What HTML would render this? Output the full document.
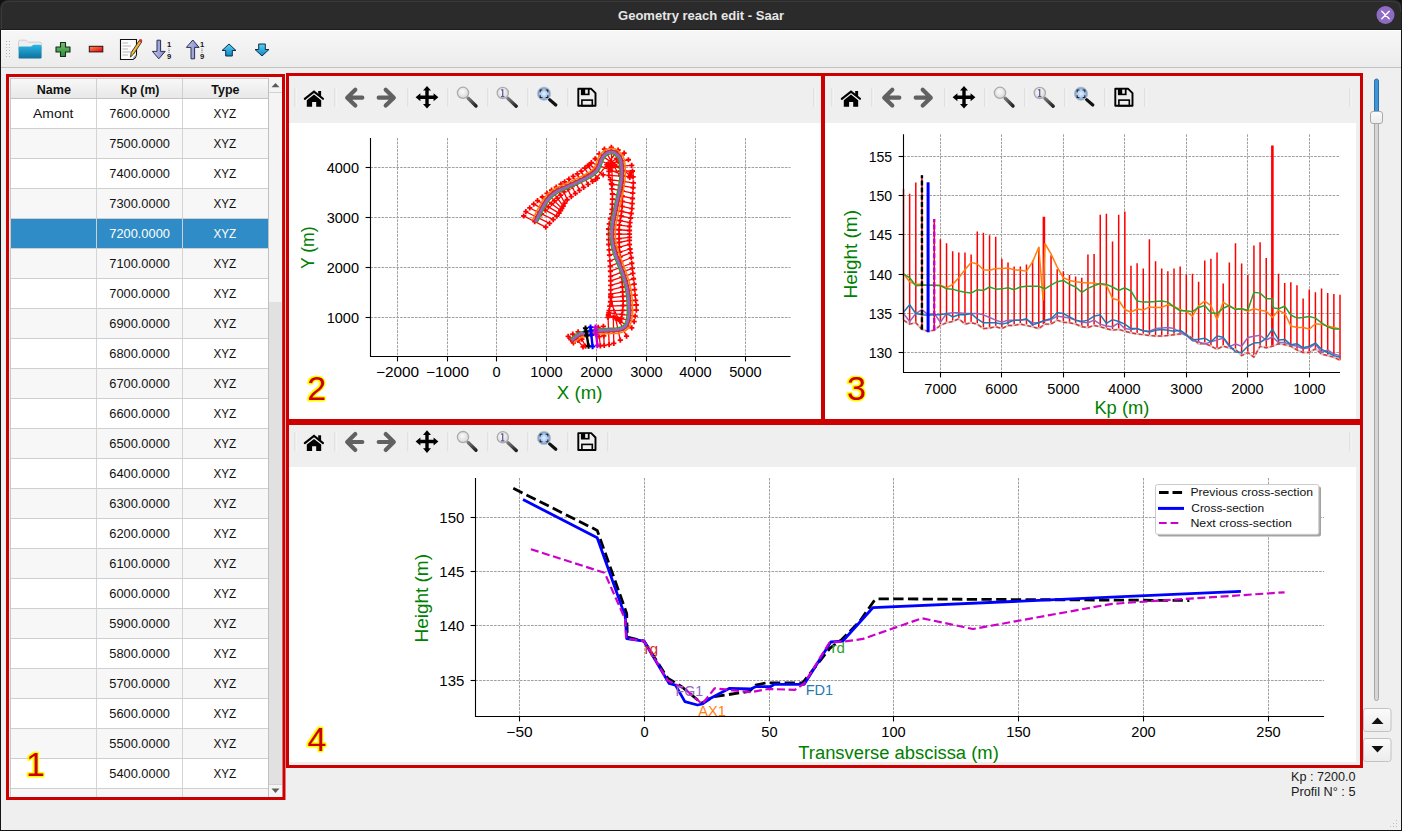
<!DOCTYPE html>
<html><head><meta charset="utf-8"><title>Geometry reach edit - Saar</title>
<style>
html,body{margin:0;padding:0;background:#efefef;overflow:hidden;}
svg{display:block;font-family:"Liberation Sans", sans-serif;}
</style></head><body>
<svg width="1402" height="831" viewBox="0 0 1402 831">
<defs>
<linearGradient id="tbg" x1="0" y1="0" x2="0" y2="1"><stop offset="0" stop-color="#f7f7f7"/><stop offset="1" stop-color="#ececec"/></linearGradient>
<linearGradient id="hdr" x1="0" y1="0" x2="0" y2="1"><stop offset="0" stop-color="#f8f8f8"/><stop offset="1" stop-color="#e8e8e8"/></linearGradient>
<linearGradient id="btn" x1="0" y1="0" x2="0" y2="1"><stop offset="0" stop-color="#fbfbfb"/><stop offset="1" stop-color="#ececec"/></linearGradient>
<linearGradient id="folderF" x1="0" y1="0" x2="0" y2="1"><stop offset="0" stop-color="#29b6e8"/><stop offset="1" stop-color="#0f6f99"/></linearGradient>
<linearGradient id="plusG" x1="0" y1="0" x2="0" y2="1"><stop offset="0" stop-color="#6fc36f"/><stop offset="1" stop-color="#2e8a3a"/></linearGradient>
<linearGradient id="minusG" x1="0" y1="0" x2="1" y2="1"><stop offset="0" stop-color="#ff8a5a"/><stop offset="1" stop-color="#e8000a"/></linearGradient>
<linearGradient id="sortG" x1="0" y1="0" x2="1" y2="0"><stop offset="0" stop-color="#c3c8ee"/><stop offset="1" stop-color="#7d86c2"/></linearGradient>
<linearGradient id="arrG" x1="0" y1="0" x2="0" y2="1"><stop offset="0" stop-color="#5fd0f5"/><stop offset="1" stop-color="#0a86c4"/></linearGradient>
<linearGradient id="handleG" x1="0" y1="0" x2="1" y2="1"><stop offset="0" stop-color="#777"/><stop offset="1" stop-color="#222"/></linearGradient>
<radialGradient id="lensG" cx="0.45" cy="0.4" r="0.6"><stop offset="0" stop-color="#fafafa"/><stop offset="1" stop-color="#d8d8d8"/></radialGradient>
<radialGradient id="lensB" cx="0.5" cy="0.5" r="0.55"><stop offset="0" stop-color="#e6eff9"/><stop offset="0.55" stop-color="#a9c6ea"/><stop offset="1" stop-color="#4a82cc"/></radialGradient>
</defs>
<rect x="0" y="0" width="1402" height="831" fill="#efefef"/>
<rect x="0" y="0" width="1402" height="30" fill="#111"/>
<path d="M0,29.5 L0,9 Q0,0 9,0 L1393,0 Q1402,0 1402,9 L1402,29.5 Z" fill="#2b2b2b"/>
<path d="M1.5,29 L1.5,9.5 Q1.5,1.5 9.5,1.5 L1392.5,1.5 Q1400.5,1.5 1400.5,9.5 L1400.5,12" fill="none" stroke="#3a3a3a" stroke-width="1"/>
<rect x="0" y="29" width="1402" height="1" fill="#1c1c1c"/>
<rect x="1401" y="0" width="1" height="30" fill="#1c1c1c"/>
<text x="701.00" y="19.60" font-size="13.5" fill="#e6e6e6" text-anchor="middle" font-weight="bold" textLength="166.00" lengthAdjust="spacingAndGlyphs" >Geometry reach edit - Saar</text>
<circle cx="1385.5" cy="15" r="9" fill="#8f6cc4"/>
<path d="M1381.8,11.3 L1389.2,18.7 M1389.2,11.3 L1381.8,18.7" stroke="#fff" stroke-width="1.4" stroke-linecap="round"/>
<rect x="0" y="30" width="1" height="801" fill="#141414"/>
<rect x="1401" y="30" width="1" height="801" fill="#141414"/>
<rect x="0" y="830" width="1402" height="1" fill="#141414"/>
<rect x="1" y="30" width="1400" height="37" fill="url(#tbg)"/>
<rect x="1" y="30" width="1400" height="1" fill="#ffffff"/>
<rect x="1" y="67" width="1400" height="1" fill="#c2c2c2"/>
<rect x="6.0" y="41" width="1" height="1" fill="#b5b5b5"/>
<rect x="9.0" y="41" width="1" height="1" fill="#b5b5b5"/>
<rect x="6.0" y="44" width="1" height="1" fill="#b5b5b5"/>
<rect x="9.0" y="44" width="1" height="1" fill="#b5b5b5"/>
<rect x="6.0" y="47" width="1" height="1" fill="#b5b5b5"/>
<rect x="9.0" y="47" width="1" height="1" fill="#b5b5b5"/>
<rect x="6.0" y="50" width="1" height="1" fill="#b5b5b5"/>
<rect x="9.0" y="50" width="1" height="1" fill="#b5b5b5"/>
<rect x="6.0" y="53" width="1" height="1" fill="#b5b5b5"/>
<rect x="9.0" y="53" width="1" height="1" fill="#b5b5b5"/>
<rect x="6.0" y="56" width="1" height="1" fill="#b5b5b5"/>
<rect x="9.0" y="56" width="1" height="1" fill="#b5b5b5"/>
<path d="M18.5,42 Q18.5,40.2 20.3,40.2 L26,40.2 L28,42.2 L40,42.2 Q41.5,42.2 41.5,44 L41.5,50 L18.5,50 Z" fill="#eeeeee" stroke="#c8c8c8" stroke-width="0.8"/>
<path d="M19.6,58.6 Q18.6,58.6 18.6,57.4 L18.6,47.8 Q18.6,46.6 20,46.6 L30.5,46.6 Q31.5,46.6 32.5,45.6 L33.5,44.8 L40,44.8 Q41.6,44.8 41.6,46.5 L41.6,57.3 Q41.6,58.6 40.3,58.6 Z" fill="url(#folderF)"/>
<path d="M60.5,42.5 L65.5,42.5 L65.5,47 L70,47 L70,52 L65.5,52 L65.5,56.5 L60.5,56.5 L60.5,52 L56,52 L56,47 L60.5,47 Z" fill="url(#plusG)" stroke="#1b2a1b" stroke-width="1.1" stroke-linejoin="round"/>
<rect x="89.3" y="46.3" width="13.5" height="5.6" fill="url(#minusG)" stroke="#2a1010" stroke-width="1"/>
<path d="M120.5,39.5 L136.5,39.5 L136.5,55 Q136,58 133,59.5 L120.5,59.5 Z" fill="#fdfdfd" stroke="#111" stroke-width="1.1"/>
<path d="M133,59.5 Q133.5,56 136.5,55" fill="#d0d0d0" stroke="#666" stroke-width="0.6"/>
<path d="M122.5,43 L128,43" stroke="#9a9a9a" stroke-width="0.7"/>
<path d="M122.5,46 L131,46" stroke="#9a9a9a" stroke-width="0.7"/>
<path d="M122.5,49 L128,49" stroke="#9a9a9a" stroke-width="0.7"/>
<path d="M122.5,52 L131,52" stroke="#9a9a9a" stroke-width="0.7"/>
<path d="M122.5,55 L128,55" stroke="#9a9a9a" stroke-width="0.7"/>
<path d="M130.5,57 L131.2,52.5 L139.5,40.2 L141.8,41.8 L133.6,54.1 Z" fill="#f3b83a" stroke="#2b2b2b" stroke-width="0.9" stroke-linejoin="round"/>
<circle cx="140.6" cy="40.6" r="1.6" fill="#d8302a"/>
<path d="M157,40.2 L160.6,40.2 L160.6,51.4 L165.2,51.4 L158.8,58.8 L152.4,51.4 L157,51.4 Z" fill="url(#sortG)" stroke="#2b2f55" stroke-width="1" stroke-linejoin="round"/>
<text x="169.00" y="47.20" font-size="7.6" fill="#111" text-anchor="middle" font-weight="bold" >1</text>
<path d="M169,48.6 L169,53" stroke="#333" stroke-width="0.8" stroke-dasharray="0.8,0.8"/>
<text x="169.00" y="59.20" font-size="7.6" fill="#111" text-anchor="middle" font-weight="bold" >9</text>
<path d="M191,58.8 L194.6,58.8 L194.6,47.4 L199.1,47.4 L192.8,40 L186.4,47.4 L191,47.4 Z" fill="url(#sortG)" stroke="#2b2f55" stroke-width="1" stroke-linejoin="round"/>
<text x="202.00" y="47.20" font-size="7.6" fill="#111" text-anchor="middle" font-weight="bold" >1</text>
<path d="M202,48.6 L202,53" stroke="#333" stroke-width="0.8" stroke-dasharray="0.8,0.8"/>
<text x="202.00" y="59.20" font-size="7.6" fill="#111" text-anchor="middle" font-weight="bold" >9</text>
<path d="M229,44 L236,50.5 L232.3,50.5 L232.3,56 L225.7,56 L225.7,50.5 L222,50.5 Z" fill="url(#arrG)" stroke="#0d2f48" stroke-width="1" stroke-linejoin="round"/>
<path d="M262,56 L269,49.5 L265.3,49.5 L265.3,44 L258.7,44 L258.7,49.5 L255,49.5 Z" fill="url(#arrG)" stroke="#0d2f48" stroke-width="1" stroke-linejoin="round"/>
<rect x="9" y="77" width="273" height="721" fill="#f2f4f4"/>
<rect x="10" y="78" width="272" height="720" fill="#c8c8c8"/>
<rect x="11" y="79" width="257" height="19" fill="url(#hdr)"/>
<rect x="11" y="98" width="257" height="1" fill="#c4c4c4"/>
<rect x="96" y="79" width="1" height="19" fill="#cfcfcf"/>
<rect x="182" y="79" width="1" height="19" fill="#cfcfcf"/>
<text x="53.80" y="93.60" font-size="12.5" fill="#111" text-anchor="middle" font-weight="bold" textLength="34.20" lengthAdjust="spacingAndGlyphs" >Name</text>
<text x="140.00" y="93.60" font-size="12.5" fill="#111" text-anchor="middle" font-weight="bold" textLength="38.70" lengthAdjust="spacingAndGlyphs" >Kp (m)</text>
<text x="225.40" y="93.60" font-size="12.5" fill="#111" text-anchor="middle" font-weight="bold" textLength="28.20" lengthAdjust="spacingAndGlyphs" >Type</text>
<rect x="11" y="99" width="257" height="698" fill="#ffffff"/>
<rect x="11" y="99" width="257" height="29" fill="#ffffff"/>
<rect x="11" y="128" width="257" height="1" fill="#cfcfcf"/>
<rect x="96" y="99" width="1" height="29" fill="#d4d4d4"/>
<rect x="182" y="99" width="1" height="29" fill="#d4d4d4"/>
<text x="53.20" y="117.90" font-size="12.5" fill="#111" text-anchor="middle" textLength="40.20" lengthAdjust="spacingAndGlyphs" >Amont</text>
<text x="139.60" y="118.10" font-size="12.4" fill="#111" text-anchor="middle" textLength="60.60" lengthAdjust="spacingAndGlyphs" >7600.0000</text>
<text x="224.80" y="118.10" font-size="12.4" fill="#111" text-anchor="middle" textLength="22.80" lengthAdjust="spacingAndGlyphs" >XYZ</text>
<rect x="11" y="129" width="257" height="29" fill="#f7f7f7"/>
<rect x="11" y="158" width="257" height="1" fill="#cfcfcf"/>
<rect x="96" y="129" width="1" height="29" fill="#d4d4d4"/>
<rect x="182" y="129" width="1" height="29" fill="#d4d4d4"/>
<text x="139.60" y="148.10" font-size="12.4" fill="#111" text-anchor="middle" textLength="60.60" lengthAdjust="spacingAndGlyphs" >7500.0000</text>
<text x="224.80" y="148.10" font-size="12.4" fill="#111" text-anchor="middle" textLength="22.80" lengthAdjust="spacingAndGlyphs" >XYZ</text>
<rect x="11" y="159" width="257" height="29" fill="#ffffff"/>
<rect x="11" y="188" width="257" height="1" fill="#cfcfcf"/>
<rect x="96" y="159" width="1" height="29" fill="#d4d4d4"/>
<rect x="182" y="159" width="1" height="29" fill="#d4d4d4"/>
<text x="139.60" y="178.10" font-size="12.4" fill="#111" text-anchor="middle" textLength="60.60" lengthAdjust="spacingAndGlyphs" >7400.0000</text>
<text x="224.80" y="178.10" font-size="12.4" fill="#111" text-anchor="middle" textLength="22.80" lengthAdjust="spacingAndGlyphs" >XYZ</text>
<rect x="11" y="189" width="257" height="29" fill="#f7f7f7"/>
<rect x="11" y="218" width="257" height="1" fill="#cfcfcf"/>
<rect x="96" y="189" width="1" height="29" fill="#d4d4d4"/>
<rect x="182" y="189" width="1" height="29" fill="#d4d4d4"/>
<text x="139.60" y="208.10" font-size="12.4" fill="#111" text-anchor="middle" textLength="60.60" lengthAdjust="spacingAndGlyphs" >7300.0000</text>
<text x="224.80" y="208.10" font-size="12.4" fill="#111" text-anchor="middle" textLength="22.80" lengthAdjust="spacingAndGlyphs" >XYZ</text>
<rect x="11" y="219" width="257" height="29" fill="#308cc6"/>
<rect x="11" y="248" width="257" height="1" fill="#cfcfcf"/>
<rect x="96" y="219" width="1" height="29" fill="#cfcfcf"/>
<rect x="182" y="219" width="1" height="29" fill="#cfcfcf"/>
<text x="139.60" y="238.10" font-size="12.4" fill="#ffffff" text-anchor="middle" textLength="60.60" lengthAdjust="spacingAndGlyphs" >7200.0000</text>
<text x="224.80" y="238.10" font-size="12.4" fill="#ffffff" text-anchor="middle" textLength="22.80" lengthAdjust="spacingAndGlyphs" >XYZ</text>
<rect x="11" y="249" width="257" height="29" fill="#f7f7f7"/>
<rect x="11" y="278" width="257" height="1" fill="#cfcfcf"/>
<rect x="96" y="249" width="1" height="29" fill="#d4d4d4"/>
<rect x="182" y="249" width="1" height="29" fill="#d4d4d4"/>
<text x="139.60" y="268.10" font-size="12.4" fill="#111" text-anchor="middle" textLength="60.60" lengthAdjust="spacingAndGlyphs" >7100.0000</text>
<text x="224.80" y="268.10" font-size="12.4" fill="#111" text-anchor="middle" textLength="22.80" lengthAdjust="spacingAndGlyphs" >XYZ</text>
<rect x="11" y="279" width="257" height="29" fill="#ffffff"/>
<rect x="11" y="308" width="257" height="1" fill="#cfcfcf"/>
<rect x="96" y="279" width="1" height="29" fill="#d4d4d4"/>
<rect x="182" y="279" width="1" height="29" fill="#d4d4d4"/>
<text x="139.60" y="298.10" font-size="12.4" fill="#111" text-anchor="middle" textLength="60.60" lengthAdjust="spacingAndGlyphs" >7000.0000</text>
<text x="224.80" y="298.10" font-size="12.4" fill="#111" text-anchor="middle" textLength="22.80" lengthAdjust="spacingAndGlyphs" >XYZ</text>
<rect x="11" y="309" width="257" height="29" fill="#f7f7f7"/>
<rect x="11" y="338" width="257" height="1" fill="#cfcfcf"/>
<rect x="96" y="309" width="1" height="29" fill="#d4d4d4"/>
<rect x="182" y="309" width="1" height="29" fill="#d4d4d4"/>
<text x="139.60" y="328.10" font-size="12.4" fill="#111" text-anchor="middle" textLength="60.60" lengthAdjust="spacingAndGlyphs" >6900.0000</text>
<text x="224.80" y="328.10" font-size="12.4" fill="#111" text-anchor="middle" textLength="22.80" lengthAdjust="spacingAndGlyphs" >XYZ</text>
<rect x="11" y="339" width="257" height="29" fill="#ffffff"/>
<rect x="11" y="368" width="257" height="1" fill="#cfcfcf"/>
<rect x="96" y="339" width="1" height="29" fill="#d4d4d4"/>
<rect x="182" y="339" width="1" height="29" fill="#d4d4d4"/>
<text x="139.60" y="358.10" font-size="12.4" fill="#111" text-anchor="middle" textLength="60.60" lengthAdjust="spacingAndGlyphs" >6800.0000</text>
<text x="224.80" y="358.10" font-size="12.4" fill="#111" text-anchor="middle" textLength="22.80" lengthAdjust="spacingAndGlyphs" >XYZ</text>
<rect x="11" y="369" width="257" height="29" fill="#f7f7f7"/>
<rect x="11" y="398" width="257" height="1" fill="#cfcfcf"/>
<rect x="96" y="369" width="1" height="29" fill="#d4d4d4"/>
<rect x="182" y="369" width="1" height="29" fill="#d4d4d4"/>
<text x="139.60" y="388.10" font-size="12.4" fill="#111" text-anchor="middle" textLength="60.60" lengthAdjust="spacingAndGlyphs" >6700.0000</text>
<text x="224.80" y="388.10" font-size="12.4" fill="#111" text-anchor="middle" textLength="22.80" lengthAdjust="spacingAndGlyphs" >XYZ</text>
<rect x="11" y="399" width="257" height="29" fill="#ffffff"/>
<rect x="11" y="428" width="257" height="1" fill="#cfcfcf"/>
<rect x="96" y="399" width="1" height="29" fill="#d4d4d4"/>
<rect x="182" y="399" width="1" height="29" fill="#d4d4d4"/>
<text x="139.60" y="418.10" font-size="12.4" fill="#111" text-anchor="middle" textLength="60.60" lengthAdjust="spacingAndGlyphs" >6600.0000</text>
<text x="224.80" y="418.10" font-size="12.4" fill="#111" text-anchor="middle" textLength="22.80" lengthAdjust="spacingAndGlyphs" >XYZ</text>
<rect x="11" y="429" width="257" height="29" fill="#f7f7f7"/>
<rect x="11" y="458" width="257" height="1" fill="#cfcfcf"/>
<rect x="96" y="429" width="1" height="29" fill="#d4d4d4"/>
<rect x="182" y="429" width="1" height="29" fill="#d4d4d4"/>
<text x="139.60" y="448.10" font-size="12.4" fill="#111" text-anchor="middle" textLength="60.60" lengthAdjust="spacingAndGlyphs" >6500.0000</text>
<text x="224.80" y="448.10" font-size="12.4" fill="#111" text-anchor="middle" textLength="22.80" lengthAdjust="spacingAndGlyphs" >XYZ</text>
<rect x="11" y="459" width="257" height="29" fill="#ffffff"/>
<rect x="11" y="488" width="257" height="1" fill="#cfcfcf"/>
<rect x="96" y="459" width="1" height="29" fill="#d4d4d4"/>
<rect x="182" y="459" width="1" height="29" fill="#d4d4d4"/>
<text x="139.60" y="478.10" font-size="12.4" fill="#111" text-anchor="middle" textLength="60.60" lengthAdjust="spacingAndGlyphs" >6400.0000</text>
<text x="224.80" y="478.10" font-size="12.4" fill="#111" text-anchor="middle" textLength="22.80" lengthAdjust="spacingAndGlyphs" >XYZ</text>
<rect x="11" y="489" width="257" height="29" fill="#f7f7f7"/>
<rect x="11" y="518" width="257" height="1" fill="#cfcfcf"/>
<rect x="96" y="489" width="1" height="29" fill="#d4d4d4"/>
<rect x="182" y="489" width="1" height="29" fill="#d4d4d4"/>
<text x="139.60" y="508.10" font-size="12.4" fill="#111" text-anchor="middle" textLength="60.60" lengthAdjust="spacingAndGlyphs" >6300.0000</text>
<text x="224.80" y="508.10" font-size="12.4" fill="#111" text-anchor="middle" textLength="22.80" lengthAdjust="spacingAndGlyphs" >XYZ</text>
<rect x="11" y="519" width="257" height="29" fill="#ffffff"/>
<rect x="11" y="548" width="257" height="1" fill="#cfcfcf"/>
<rect x="96" y="519" width="1" height="29" fill="#d4d4d4"/>
<rect x="182" y="519" width="1" height="29" fill="#d4d4d4"/>
<text x="139.60" y="538.10" font-size="12.4" fill="#111" text-anchor="middle" textLength="60.60" lengthAdjust="spacingAndGlyphs" >6200.0000</text>
<text x="224.80" y="538.10" font-size="12.4" fill="#111" text-anchor="middle" textLength="22.80" lengthAdjust="spacingAndGlyphs" >XYZ</text>
<rect x="11" y="549" width="257" height="29" fill="#f7f7f7"/>
<rect x="11" y="578" width="257" height="1" fill="#cfcfcf"/>
<rect x="96" y="549" width="1" height="29" fill="#d4d4d4"/>
<rect x="182" y="549" width="1" height="29" fill="#d4d4d4"/>
<text x="139.60" y="568.10" font-size="12.4" fill="#111" text-anchor="middle" textLength="60.60" lengthAdjust="spacingAndGlyphs" >6100.0000</text>
<text x="224.80" y="568.10" font-size="12.4" fill="#111" text-anchor="middle" textLength="22.80" lengthAdjust="spacingAndGlyphs" >XYZ</text>
<rect x="11" y="579" width="257" height="29" fill="#ffffff"/>
<rect x="11" y="608" width="257" height="1" fill="#cfcfcf"/>
<rect x="96" y="579" width="1" height="29" fill="#d4d4d4"/>
<rect x="182" y="579" width="1" height="29" fill="#d4d4d4"/>
<text x="139.60" y="598.10" font-size="12.4" fill="#111" text-anchor="middle" textLength="60.60" lengthAdjust="spacingAndGlyphs" >6000.0000</text>
<text x="224.80" y="598.10" font-size="12.4" fill="#111" text-anchor="middle" textLength="22.80" lengthAdjust="spacingAndGlyphs" >XYZ</text>
<rect x="11" y="609" width="257" height="29" fill="#f7f7f7"/>
<rect x="11" y="638" width="257" height="1" fill="#cfcfcf"/>
<rect x="96" y="609" width="1" height="29" fill="#d4d4d4"/>
<rect x="182" y="609" width="1" height="29" fill="#d4d4d4"/>
<text x="139.60" y="628.10" font-size="12.4" fill="#111" text-anchor="middle" textLength="60.60" lengthAdjust="spacingAndGlyphs" >5900.0000</text>
<text x="224.80" y="628.10" font-size="12.4" fill="#111" text-anchor="middle" textLength="22.80" lengthAdjust="spacingAndGlyphs" >XYZ</text>
<rect x="11" y="639" width="257" height="29" fill="#ffffff"/>
<rect x="11" y="668" width="257" height="1" fill="#cfcfcf"/>
<rect x="96" y="639" width="1" height="29" fill="#d4d4d4"/>
<rect x="182" y="639" width="1" height="29" fill="#d4d4d4"/>
<text x="139.60" y="658.10" font-size="12.4" fill="#111" text-anchor="middle" textLength="60.60" lengthAdjust="spacingAndGlyphs" >5800.0000</text>
<text x="224.80" y="658.10" font-size="12.4" fill="#111" text-anchor="middle" textLength="22.80" lengthAdjust="spacingAndGlyphs" >XYZ</text>
<rect x="11" y="669" width="257" height="29" fill="#f7f7f7"/>
<rect x="11" y="698" width="257" height="1" fill="#cfcfcf"/>
<rect x="96" y="669" width="1" height="29" fill="#d4d4d4"/>
<rect x="182" y="669" width="1" height="29" fill="#d4d4d4"/>
<text x="139.60" y="688.10" font-size="12.4" fill="#111" text-anchor="middle" textLength="60.60" lengthAdjust="spacingAndGlyphs" >5700.0000</text>
<text x="224.80" y="688.10" font-size="12.4" fill="#111" text-anchor="middle" textLength="22.80" lengthAdjust="spacingAndGlyphs" >XYZ</text>
<rect x="11" y="699" width="257" height="29" fill="#ffffff"/>
<rect x="11" y="728" width="257" height="1" fill="#cfcfcf"/>
<rect x="96" y="699" width="1" height="29" fill="#d4d4d4"/>
<rect x="182" y="699" width="1" height="29" fill="#d4d4d4"/>
<text x="139.60" y="718.10" font-size="12.4" fill="#111" text-anchor="middle" textLength="60.60" lengthAdjust="spacingAndGlyphs" >5600.0000</text>
<text x="224.80" y="718.10" font-size="12.4" fill="#111" text-anchor="middle" textLength="22.80" lengthAdjust="spacingAndGlyphs" >XYZ</text>
<rect x="11" y="729" width="257" height="29" fill="#f7f7f7"/>
<rect x="11" y="758" width="257" height="1" fill="#cfcfcf"/>
<rect x="96" y="729" width="1" height="29" fill="#d4d4d4"/>
<rect x="182" y="729" width="1" height="29" fill="#d4d4d4"/>
<text x="139.60" y="748.10" font-size="12.4" fill="#111" text-anchor="middle" textLength="60.60" lengthAdjust="spacingAndGlyphs" >5500.0000</text>
<text x="224.80" y="748.10" font-size="12.4" fill="#111" text-anchor="middle" textLength="22.80" lengthAdjust="spacingAndGlyphs" >XYZ</text>
<rect x="11" y="759" width="257" height="29" fill="#ffffff"/>
<rect x="11" y="788" width="257" height="1" fill="#cfcfcf"/>
<rect x="96" y="759" width="1" height="29" fill="#d4d4d4"/>
<rect x="182" y="759" width="1" height="29" fill="#d4d4d4"/>
<text x="139.60" y="778.10" font-size="12.4" fill="#111" text-anchor="middle" textLength="60.60" lengthAdjust="spacingAndGlyphs" >5400.0000</text>
<text x="224.80" y="778.10" font-size="12.4" fill="#111" text-anchor="middle" textLength="22.80" lengthAdjust="spacingAndGlyphs" >XYZ</text>
<rect x="11" y="789" width="257" height="8" fill="#f7f7f7"/>
<rect x="96" y="789" width="1" height="8" fill="#d4d4d4"/>
<rect x="182" y="789" width="1" height="8" fill="#d4d4d4"/>
<rect x="268" y="78" width="1" height="720" fill="#c0c0c0"/>
<rect x="269" y="78" width="13" height="720" fill="#f4f4f4"/>
<rect x="269" y="92" width="13" height="1" fill="#d2d2d2"/>
<path d="M271.5,87.3 L279.5,87.3 L275.5,83 Z" fill="#5a5a5a"/>
<rect x="269" y="302" width="13" height="482" fill="#e1e1e1"/>
<rect x="269" y="784" width="13" height="1" fill="#d2d2d2"/>
<path d="M271.5,788.5 L279.5,788.5 L275.5,793 Z" fill="#5a5a5a"/>
<path d="M7.5,75.5 L283.5,75.5 L284,798.5 L7.5,798.5 Z" fill="none" stroke="#cc0000" stroke-width="3"/>
<rect x="289" y="76" width="532" height="47" fill="#efefef"/>
<rect x="289" y="123" width="532" height="296" fill="#ffffff"/>
<rect x="825" y="76" width="535" height="47" fill="#efefef"/>
<rect x="825" y="123" width="531" height="296" fill="#ffffff"/>
<rect x="289" y="425" width="1071" height="42" fill="#efefef"/>
<rect x="289" y="467" width="1067" height="295" fill="#ffffff"/>
<rect x="294.5" y="88.0" width="1" height="19" fill="#d3d3d3"/>
<rect x="295.5" y="88.0" width="1" height="19" fill="#fafafa"/>
<rect x="334.5" y="88.0" width="1" height="19" fill="#d3d3d3"/>
<rect x="335.5" y="88.0" width="1" height="19" fill="#fafafa"/>
<rect x="407.5" y="88.0" width="1" height="19" fill="#d3d3d3"/>
<rect x="408.5" y="88.0" width="1" height="19" fill="#fafafa"/>
<rect x="447.5" y="88.0" width="1" height="19" fill="#d3d3d3"/>
<rect x="448.5" y="88.0" width="1" height="19" fill="#fafafa"/>
<rect x="487.5" y="88.0" width="1" height="19" fill="#d3d3d3"/>
<rect x="488.5" y="88.0" width="1" height="19" fill="#fafafa"/>
<rect x="527.5" y="88.0" width="1" height="19" fill="#d3d3d3"/>
<rect x="528.5" y="88.0" width="1" height="19" fill="#fafafa"/>
<rect x="567.5" y="88.0" width="1" height="19" fill="#d3d3d3"/>
<rect x="568.5" y="88.0" width="1" height="19" fill="#fafafa"/>
<rect x="607.5" y="88.0" width="1" height="19" fill="#d3d3d3"/>
<rect x="608.5" y="88.0" width="1" height="19" fill="#fafafa"/>
<rect x="813.5" y="88.0" width="1" height="19" fill="#d3d3d3"/>
<rect x="814.5" y="88.0" width="1" height="19" fill="#fafafa"/>
<g transform="translate(0,0)"><path d="M304.8,98.8 L314,91.6 L323,98.8" fill="none" stroke="#000" stroke-width="2.1" stroke-linecap="round" stroke-linejoin="miter"/><rect x="318.2" y="91" width="2.9" height="5" fill="#000"/><path d="M306.8,100.3 L314,94.6 L321.2,100.3 L321.2,106.8 L316.2,106.8 L316.2,102 L312.1,102 L312.1,106.8 L306.8,106.8 Z" fill="#000"/><path d="M355.3,89.8 L347.2,97.7 L355.3,105.6 M348.2,97.7 L362.3,97.7" fill="none" stroke="#616161" stroke-width="4.2" stroke-linecap="round" stroke-linejoin="round"/><path d="M385.7,89.8 L393.8,97.7 L385.7,105.6 M392.8,97.7 L378.7,97.7" fill="none" stroke="#616161" stroke-width="4.2" stroke-linecap="round" stroke-linejoin="round"/><path d="M427,86 L431,90.6 L428.7,90.6 L428.7,95.5 L433.6,95.5 L433.6,93.2 L438.4,97.25 L433.6,101.3 L433.6,99 L428.7,99 L428.7,103.9 L431,103.9 L427,108.6 L423,103.9 L425.3,103.9 L425.3,99 L420.4,99 L420.4,101.3 L415.6,97.25 L420.4,93.2 L420.4,95.5 L425.3,95.5 L425.3,90.6 L423,90.6 Z" fill="#000"/><path d="M468.2,98.2 L476,106" stroke="url(#handleG)" stroke-width="3.4" stroke-linecap="round"/><circle cx="463" cy="92.8" r="5.6" fill="url(#lensG)" stroke="#aaaaaa" stroke-width="1.3"/><path d="M508,98.4 L516.2,106.2" stroke="url(#handleG)" stroke-width="3.4" stroke-linecap="round"/><circle cx="502.8" cy="93" r="5.6" fill="url(#lensG)" stroke="#aaaaaa" stroke-width="1.3"/><path d="M502.7,89.2 L502.7,96.5 M501,96.6 L504.4,96.6 M501.2,90.2 L502.7,89.2" stroke="#5c5c9c" stroke-width="1.3" fill="none"/><path d="M549.6,99.6 L555.8,105" stroke="#111" stroke-width="3.2" stroke-linecap="round"/><circle cx="544" cy="93.7" r="6.6" fill="url(#lensB)" stroke="#c0c0c0" stroke-width="0.9"/><path d="M540.2,92.2 L540.2,90 L542.4,90 M545.6,90 L547.8,90 L547.8,92.2 M547.8,95.3 L547.8,97.5 L545.6,97.5 M542.4,97.5 L540.2,97.5 L540.2,95.3" fill="none" stroke="#222" stroke-width="1.1"/><path d="M578.3,88.8 L591.2,88.8 L595.5,93.2 L595.5,105.7 L578.3,105.7 Z" fill="none" stroke="#000" stroke-width="1.9" stroke-linejoin="round"/><path d="M580.9,88.5 L589.6,88.5 L589.6,95.2 L580.9,95.2 Z" fill="#000"/><rect x="585.2" y="89.6" width="2.6" height="4" fill="#efefef"/><rect x="581.9" y="100.1" width="10.4" height="5.6" fill="none" stroke="#000" stroke-width="1.6"/></g>
<rect x="831.5" y="88.0" width="1" height="19" fill="#d3d3d3"/>
<rect x="832.5" y="88.0" width="1" height="19" fill="#fafafa"/>
<rect x="871.5" y="88.0" width="1" height="19" fill="#d3d3d3"/>
<rect x="872.5" y="88.0" width="1" height="19" fill="#fafafa"/>
<rect x="944.5" y="88.0" width="1" height="19" fill="#d3d3d3"/>
<rect x="945.5" y="88.0" width="1" height="19" fill="#fafafa"/>
<rect x="984.5" y="88.0" width="1" height="19" fill="#d3d3d3"/>
<rect x="985.5" y="88.0" width="1" height="19" fill="#fafafa"/>
<rect x="1024.5" y="88.0" width="1" height="19" fill="#d3d3d3"/>
<rect x="1025.5" y="88.0" width="1" height="19" fill="#fafafa"/>
<rect x="1064.5" y="88.0" width="1" height="19" fill="#d3d3d3"/>
<rect x="1065.5" y="88.0" width="1" height="19" fill="#fafafa"/>
<rect x="1104.5" y="88.0" width="1" height="19" fill="#d3d3d3"/>
<rect x="1105.5" y="88.0" width="1" height="19" fill="#fafafa"/>
<rect x="1144.5" y="88.0" width="1" height="19" fill="#d3d3d3"/>
<rect x="1145.5" y="88.0" width="1" height="19" fill="#fafafa"/>
<rect x="1349.5" y="88.0" width="1" height="19" fill="#d3d3d3"/>
<rect x="1350.5" y="88.0" width="1" height="19" fill="#fafafa"/>
<g transform="translate(537,0)"><path d="M304.8,98.8 L314,91.6 L323,98.8" fill="none" stroke="#000" stroke-width="2.1" stroke-linecap="round" stroke-linejoin="miter"/><rect x="318.2" y="91" width="2.9" height="5" fill="#000"/><path d="M306.8,100.3 L314,94.6 L321.2,100.3 L321.2,106.8 L316.2,106.8 L316.2,102 L312.1,102 L312.1,106.8 L306.8,106.8 Z" fill="#000"/><path d="M355.3,89.8 L347.2,97.7 L355.3,105.6 M348.2,97.7 L362.3,97.7" fill="none" stroke="#616161" stroke-width="4.2" stroke-linecap="round" stroke-linejoin="round"/><path d="M385.7,89.8 L393.8,97.7 L385.7,105.6 M392.8,97.7 L378.7,97.7" fill="none" stroke="#616161" stroke-width="4.2" stroke-linecap="round" stroke-linejoin="round"/><path d="M427,86 L431,90.6 L428.7,90.6 L428.7,95.5 L433.6,95.5 L433.6,93.2 L438.4,97.25 L433.6,101.3 L433.6,99 L428.7,99 L428.7,103.9 L431,103.9 L427,108.6 L423,103.9 L425.3,103.9 L425.3,99 L420.4,99 L420.4,101.3 L415.6,97.25 L420.4,93.2 L420.4,95.5 L425.3,95.5 L425.3,90.6 L423,90.6 Z" fill="#000"/><path d="M468.2,98.2 L476,106" stroke="url(#handleG)" stroke-width="3.4" stroke-linecap="round"/><circle cx="463" cy="92.8" r="5.6" fill="url(#lensG)" stroke="#aaaaaa" stroke-width="1.3"/><path d="M508,98.4 L516.2,106.2" stroke="url(#handleG)" stroke-width="3.4" stroke-linecap="round"/><circle cx="502.8" cy="93" r="5.6" fill="url(#lensG)" stroke="#aaaaaa" stroke-width="1.3"/><path d="M502.7,89.2 L502.7,96.5 M501,96.6 L504.4,96.6 M501.2,90.2 L502.7,89.2" stroke="#5c5c9c" stroke-width="1.3" fill="none"/><path d="M549.6,99.6 L555.8,105" stroke="#111" stroke-width="3.2" stroke-linecap="round"/><circle cx="544" cy="93.7" r="6.6" fill="url(#lensB)" stroke="#c0c0c0" stroke-width="0.9"/><path d="M540.2,92.2 L540.2,90 L542.4,90 M545.6,90 L547.8,90 L547.8,92.2 M547.8,95.3 L547.8,97.5 L545.6,97.5 M542.4,97.5 L540.2,97.5 L540.2,95.3" fill="none" stroke="#222" stroke-width="1.1"/><path d="M578.3,88.8 L591.2,88.8 L595.5,93.2 L595.5,105.7 L578.3,105.7 Z" fill="none" stroke="#000" stroke-width="1.9" stroke-linejoin="round"/><path d="M580.9,88.5 L589.6,88.5 L589.6,95.2 L580.9,95.2 Z" fill="#000"/><rect x="585.2" y="89.6" width="2.6" height="4" fill="#efefef"/><rect x="581.9" y="100.1" width="10.4" height="5.6" fill="none" stroke="#000" stroke-width="1.6"/></g>
<rect x="294.5" y="432.3" width="1" height="19" fill="#d3d3d3"/>
<rect x="295.5" y="432.3" width="1" height="19" fill="#fafafa"/>
<rect x="334.5" y="432.3" width="1" height="19" fill="#d3d3d3"/>
<rect x="335.5" y="432.3" width="1" height="19" fill="#fafafa"/>
<rect x="407.5" y="432.3" width="1" height="19" fill="#d3d3d3"/>
<rect x="408.5" y="432.3" width="1" height="19" fill="#fafafa"/>
<rect x="447.5" y="432.3" width="1" height="19" fill="#d3d3d3"/>
<rect x="448.5" y="432.3" width="1" height="19" fill="#fafafa"/>
<rect x="487.5" y="432.3" width="1" height="19" fill="#d3d3d3"/>
<rect x="488.5" y="432.3" width="1" height="19" fill="#fafafa"/>
<rect x="527.5" y="432.3" width="1" height="19" fill="#d3d3d3"/>
<rect x="528.5" y="432.3" width="1" height="19" fill="#fafafa"/>
<rect x="567.5" y="432.3" width="1" height="19" fill="#d3d3d3"/>
<rect x="568.5" y="432.3" width="1" height="19" fill="#fafafa"/>
<rect x="607.5" y="432.3" width="1" height="19" fill="#d3d3d3"/>
<rect x="608.5" y="432.3" width="1" height="19" fill="#fafafa"/>
<rect x="1349.5" y="432.3" width="1" height="19" fill="#d3d3d3"/>
<rect x="1350.5" y="432.3" width="1" height="19" fill="#fafafa"/>
<g transform="translate(0,344.3)"><path d="M304.8,98.8 L314,91.6 L323,98.8" fill="none" stroke="#000" stroke-width="2.1" stroke-linecap="round" stroke-linejoin="miter"/><rect x="318.2" y="91" width="2.9" height="5" fill="#000"/><path d="M306.8,100.3 L314,94.6 L321.2,100.3 L321.2,106.8 L316.2,106.8 L316.2,102 L312.1,102 L312.1,106.8 L306.8,106.8 Z" fill="#000"/><path d="M355.3,89.8 L347.2,97.7 L355.3,105.6 M348.2,97.7 L362.3,97.7" fill="none" stroke="#616161" stroke-width="4.2" stroke-linecap="round" stroke-linejoin="round"/><path d="M385.7,89.8 L393.8,97.7 L385.7,105.6 M392.8,97.7 L378.7,97.7" fill="none" stroke="#616161" stroke-width="4.2" stroke-linecap="round" stroke-linejoin="round"/><path d="M427,86 L431,90.6 L428.7,90.6 L428.7,95.5 L433.6,95.5 L433.6,93.2 L438.4,97.25 L433.6,101.3 L433.6,99 L428.7,99 L428.7,103.9 L431,103.9 L427,108.6 L423,103.9 L425.3,103.9 L425.3,99 L420.4,99 L420.4,101.3 L415.6,97.25 L420.4,93.2 L420.4,95.5 L425.3,95.5 L425.3,90.6 L423,90.6 Z" fill="#000"/><path d="M468.2,98.2 L476,106" stroke="url(#handleG)" stroke-width="3.4" stroke-linecap="round"/><circle cx="463" cy="92.8" r="5.6" fill="url(#lensG)" stroke="#aaaaaa" stroke-width="1.3"/><path d="M508,98.4 L516.2,106.2" stroke="url(#handleG)" stroke-width="3.4" stroke-linecap="round"/><circle cx="502.8" cy="93" r="5.6" fill="url(#lensG)" stroke="#aaaaaa" stroke-width="1.3"/><path d="M502.7,89.2 L502.7,96.5 M501,96.6 L504.4,96.6 M501.2,90.2 L502.7,89.2" stroke="#5c5c9c" stroke-width="1.3" fill="none"/><path d="M549.6,99.6 L555.8,105" stroke="#111" stroke-width="3.2" stroke-linecap="round"/><circle cx="544" cy="93.7" r="6.6" fill="url(#lensB)" stroke="#c0c0c0" stroke-width="0.9"/><path d="M540.2,92.2 L540.2,90 L542.4,90 M545.6,90 L547.8,90 L547.8,92.2 M547.8,95.3 L547.8,97.5 L545.6,97.5 M542.4,97.5 L540.2,97.5 L540.2,95.3" fill="none" stroke="#222" stroke-width="1.1"/><path d="M578.3,88.8 L591.2,88.8 L595.5,93.2 L595.5,105.7 L578.3,105.7 Z" fill="none" stroke="#000" stroke-width="1.9" stroke-linejoin="round"/><path d="M580.9,88.5 L589.6,88.5 L589.6,95.2 L580.9,95.2 Z" fill="#000"/><rect x="585.2" y="89.6" width="2.6" height="4" fill="#efefef"/><rect x="581.9" y="100.1" width="10.4" height="5.6" fill="none" stroke="#000" stroke-width="1.6"/></g>
<path d="M397.50,138.00 L397.50,356.50" stroke="#a0a0a0" stroke-width="1.0" stroke-dasharray="2.6,1.1"/>
<path d="M447.50,138.00 L447.50,356.50" stroke="#a0a0a0" stroke-width="1.0" stroke-dasharray="2.6,1.1"/>
<path d="M496.50,138.00 L496.50,356.50" stroke="#a0a0a0" stroke-width="1.0" stroke-dasharray="2.6,1.1"/>
<path d="M546.50,138.00 L546.50,356.50" stroke="#a0a0a0" stroke-width="1.0" stroke-dasharray="2.6,1.1"/>
<path d="M596.50,138.00 L596.50,356.50" stroke="#a0a0a0" stroke-width="1.0" stroke-dasharray="2.6,1.1"/>
<path d="M646.50,138.00 L646.50,356.50" stroke="#a0a0a0" stroke-width="1.0" stroke-dasharray="2.6,1.1"/>
<path d="M695.50,138.00 L695.50,356.50" stroke="#a0a0a0" stroke-width="1.0" stroke-dasharray="2.6,1.1"/>
<path d="M745.50,138.00 L745.50,356.50" stroke="#a0a0a0" stroke-width="1.0" stroke-dasharray="2.6,1.1"/>
<path d="M370.50,317.50 L790.50,317.50" stroke="#a0a0a0" stroke-width="1.0" stroke-dasharray="2.6,1.1"/>
<path d="M370.50,267.50 L790.50,267.50" stroke="#a0a0a0" stroke-width="1.0" stroke-dasharray="2.6,1.1"/>
<path d="M370.50,217.50 L790.50,217.50" stroke="#a0a0a0" stroke-width="1.0" stroke-dasharray="2.6,1.1"/>
<path d="M370.50,167.50 L790.50,167.50" stroke="#a0a0a0" stroke-width="1.0" stroke-dasharray="2.6,1.1"/>
<path d="M573.44,342.91 L568.19,336.40 M583.02,346.91 L572.79,334.10 M585.53,346.20 L578.13,331.89 M600.35,345.78 L598.17,327.35 M604.18,345.38 L603.39,326.28 M609.13,344.63 L608.05,317.33 M613.78,343.33 L613.35,317.16 M620.31,340.13 L610.70,296.08 M626.54,336.16 L610.42,301.86 M631.74,327.82 L608.42,315.01 M634.13,321.68 L608.37,315.31 M635.21,316.04 L608.76,312.78 M636.33,310.15 L609.08,310.65 M636.29,304.99 L609.78,306.06 M635.70,300.43 L610.44,301.72 M635.12,295.09 L610.70,297.66 M634.68,289.53 L610.70,294.06 M634.22,284.06 L610.70,289.95 M633.57,278.76 L610.70,285.36 M632.90,273.33 L610.70,280.76 M632.32,268.46 L610.58,276.42 M631.83,263.24 L610.41,271.23 M631.26,257.74 L610.24,266.21 M630.58,252.85 L609.91,260.83 M630.03,249.00 L609.51,255.12 M629.50,244.48 L609.14,249.84 M629.50,240.40 L608.79,244.49 M629.50,237.47 L608.71,239.60 M629.50,234.18 L608.62,234.26 M629.50,230.49 L608.53,229.00 M629.50,226.48 L609.24,223.84 M629.98,222.57 L610.42,218.76 M630.61,218.01 L611.58,213.81 M631.24,213.49 L612.08,209.32 M631.92,208.57 L612.23,204.22 M632.23,203.63 L612.38,199.09 M632.51,198.48 L612.40,194.00 M632.79,193.09 L611.89,188.96 M633.08,187.73 L611.38,184.00 M633.34,182.79 L610.31,179.63 M633.13,176.82 L608.84,175.42 M632.41,171.02 L608.91,171.35 M631.71,165.41 L608.73,167.15 M628.40,159.75 L608.32,163.73 M624.15,153.03 L608.73,164.25 M618.05,150.00 L595.59,179.32 M611.33,147.46 L612.30,184.72 M604.41,149.15 L622.94,181.71 M599.27,153.90 L630.17,175.29 M595.15,158.76 L631.38,172.94 M591.35,162.67 L629.74,177.52 M589.28,164.39 L603.17,174.97 M587.62,165.77 L597.41,178.10 M584.77,168.14 L592.53,181.36 M581.23,171.08 L588.06,184.35 M577.32,173.81 L583.65,187.30 M573.15,176.47 L579.45,190.38 M568.89,179.19 L575.36,193.50 M564.64,181.90 L571.26,196.64 M560.94,184.20 L567.19,199.75 M556.27,187.10 L564.86,203.20 M551.54,190.04 L563.22,206.03 M547.01,193.40 L561.87,208.36 M542.34,196.98 L560.64,210.49 M537.50,200.68 L559.10,213.14 M533.72,204.16 L556.74,216.16 M529.75,207.97 L553.25,219.65 M525.84,211.72 L549.59,223.31 M523.72,216.02 L545.72,227.18 " stroke="#ff0000" stroke-width="1.3" fill="none"/>
<path d="M570.84,342.91 h5.20 M573.44,340.31 v5.20 M565.59,336.40 h5.20 M568.19,333.80 v5.20 M568.22,339.66 h5.20 M570.82,337.06 v5.20 M580.42,346.91 h5.20 M583.02,344.31 v5.20 M570.19,334.10 h5.20 M572.79,331.50 v5.20 M575.30,340.50 h5.20 M577.90,337.90 v5.20 M582.93,346.20 h5.20 M585.53,343.60 v5.20 M575.53,331.89 h5.20 M578.13,329.29 v5.20 M579.23,339.04 h5.20 M581.83,336.44 v5.20 M597.75,345.78 h5.20 M600.35,343.18 v5.20 M595.57,327.35 h5.20 M598.17,324.75 v5.20 M596.66,336.56 h5.20 M599.26,333.96 v5.20 M601.58,345.38 h5.20 M604.18,342.78 v5.20 M600.79,326.28 h5.20 M603.39,323.68 v5.20 M601.19,335.83 h5.20 M603.79,333.23 v5.20 M606.53,344.63 h5.20 M609.13,342.03 v5.20 M605.45,317.33 h5.20 M608.05,314.73 v5.20 M605.99,330.98 h5.20 M608.59,328.38 v5.20 M611.18,343.33 h5.20 M613.78,340.73 v5.20 M610.75,317.16 h5.20 M613.35,314.56 v5.20 M610.96,330.25 h5.20 M613.56,327.65 v5.20 M617.71,340.13 h5.20 M620.31,337.53 v5.20 M608.10,296.08 h5.20 M610.70,293.48 v5.20 M612.91,318.11 h5.20 M615.51,315.51 v5.20 M623.94,336.16 h5.20 M626.54,333.56 v5.20 M607.82,301.86 h5.20 M610.42,299.26 v5.20 M615.88,319.01 h5.20 M618.48,316.41 v5.20 M629.14,327.82 h5.20 M631.74,325.22 v5.20 M605.82,315.01 h5.20 M608.42,312.41 v5.20 M617.48,321.41 h5.20 M620.08,318.81 v5.20 M631.53,321.68 h5.20 M634.13,319.08 v5.20 M605.77,315.31 h5.20 M608.37,312.71 v5.20 M618.65,318.50 h5.20 M621.25,315.90 v5.20 M632.61,316.04 h5.20 M635.21,313.44 v5.20 M606.16,312.78 h5.20 M608.76,310.18 v5.20 M619.38,314.41 h5.20 M621.98,311.81 v5.20 M633.73,310.15 h5.20 M636.33,307.55 v5.20 M606.48,310.65 h5.20 M609.08,308.05 v5.20 M620.11,310.40 h5.20 M622.71,307.80 v5.20 M633.69,304.99 h5.20 M636.29,302.39 v5.20 M607.18,306.06 h5.20 M609.78,303.46 v5.20 M620.43,305.52 h5.20 M623.03,302.92 v5.20 M633.10,300.43 h5.20 M635.70,297.83 v5.20 M607.84,301.72 h5.20 M610.44,299.12 v5.20 M620.47,301.08 h5.20 M623.07,298.48 v5.20 M632.52,295.09 h5.20 M635.12,292.49 v5.20 M608.10,297.66 h5.20 M610.70,295.06 v5.20 M620.31,296.38 h5.20 M622.91,293.78 v5.20 M632.08,289.53 h5.20 M634.68,286.93 v5.20 M608.10,294.06 h5.20 M610.70,291.46 v5.20 M620.09,291.79 h5.20 M622.69,289.19 v5.20 M631.62,284.06 h5.20 M634.22,281.46 v5.20 M608.10,289.95 h5.20 M610.70,287.35 v5.20 M619.86,287.01 h5.20 M622.46,284.41 v5.20 M630.97,278.76 h5.20 M633.57,276.16 v5.20 M608.10,285.36 h5.20 M610.70,282.76 v5.20 M619.53,282.06 h5.20 M622.13,279.46 v5.20 M630.30,273.33 h5.20 M632.90,270.73 v5.20 M608.10,280.76 h5.20 M610.70,278.16 v5.20 M619.20,277.04 h5.20 M621.80,274.44 v5.20 M629.72,268.46 h5.20 M632.32,265.86 v5.20 M607.98,276.42 h5.20 M610.58,273.82 v5.20 M618.85,272.44 h5.20 M621.45,269.84 v5.20 M629.23,263.24 h5.20 M631.83,260.64 v5.20 M607.81,271.23 h5.20 M610.41,268.63 v5.20 M618.52,267.23 h5.20 M621.12,264.63 v5.20 M628.66,257.74 h5.20 M631.26,255.14 v5.20 M607.64,266.21 h5.20 M610.24,263.61 v5.20 M618.15,261.97 h5.20 M620.75,259.37 v5.20 M627.98,252.85 h5.20 M630.58,250.25 v5.20 M607.31,260.83 h5.20 M609.91,258.23 v5.20 M617.64,256.84 h5.20 M620.24,254.24 v5.20 M627.43,249.00 h5.20 M630.03,246.40 v5.20 M606.91,255.12 h5.20 M609.51,252.52 v5.20 M617.17,252.06 h5.20 M619.77,249.46 v5.20 M626.90,244.48 h5.20 M629.50,241.88 v5.20 M606.54,249.84 h5.20 M609.14,247.24 v5.20 M616.72,247.16 h5.20 M619.32,244.56 v5.20 M626.90,240.40 h5.20 M629.50,237.80 v5.20 M606.19,244.49 h5.20 M608.79,241.89 v5.20 M616.55,242.45 h5.20 M619.15,239.85 v5.20 M626.90,237.47 h5.20 M629.50,234.87 v5.20 M606.11,239.60 h5.20 M608.71,237.00 v5.20 M616.50,238.53 h5.20 M619.10,235.93 v5.20 M626.90,234.18 h5.20 M629.50,231.58 v5.20 M606.02,234.26 h5.20 M608.62,231.66 v5.20 M616.46,234.22 h5.20 M619.06,231.62 v5.20 M626.90,230.49 h5.20 M629.50,227.89 v5.20 M605.93,229.00 h5.20 M608.53,226.40 v5.20 M616.42,229.74 h5.20 M619.02,227.14 v5.20 M626.90,226.48 h5.20 M629.50,223.88 v5.20 M606.64,223.84 h5.20 M609.24,221.24 v5.20 M616.77,225.16 h5.20 M619.37,222.56 v5.20 M627.38,222.57 h5.20 M629.98,219.97 v5.20 M607.82,218.76 h5.20 M610.42,216.16 v5.20 M617.60,220.66 h5.20 M620.20,218.06 v5.20 M628.01,218.01 h5.20 M630.61,215.41 v5.20 M608.98,213.81 h5.20 M611.58,211.21 v5.20 M618.49,215.91 h5.20 M621.09,213.31 v5.20 M628.64,213.49 h5.20 M631.24,210.89 v5.20 M609.48,209.32 h5.20 M612.08,206.72 v5.20 M619.06,211.41 h5.20 M621.66,208.81 v5.20 M629.32,208.57 h5.20 M631.92,205.97 v5.20 M609.63,204.22 h5.20 M612.23,201.62 v5.20 M619.47,206.40 h5.20 M622.07,203.80 v5.20 M629.63,203.63 h5.20 M632.23,201.03 v5.20 M609.78,199.09 h5.20 M612.38,196.49 v5.20 M619.71,201.36 h5.20 M622.31,198.76 v5.20 M629.91,198.48 h5.20 M632.51,195.88 v5.20 M609.80,194.00 h5.20 M612.40,191.40 v5.20 M619.85,196.24 h5.20 M622.45,193.64 v5.20 M630.19,193.09 h5.20 M632.79,190.49 v5.20 M609.29,188.96 h5.20 M611.89,186.36 v5.20 M619.74,191.03 h5.20 M622.34,188.43 v5.20 M630.48,187.73 h5.20 M633.08,185.13 v5.20 M608.78,184.00 h5.20 M611.38,181.40 v5.20 M619.63,185.87 h5.20 M622.23,183.27 v5.20 M630.74,182.79 h5.20 M633.34,180.19 v5.20 M607.71,179.63 h5.20 M610.31,177.03 v5.20 M619.22,181.21 h5.20 M621.82,178.61 v5.20 M630.53,176.82 h5.20 M633.13,174.22 v5.20 M606.24,175.42 h5.20 M608.84,172.82 v5.20 M618.39,176.12 h5.20 M620.99,173.52 v5.20 M629.81,171.02 h5.20 M632.41,168.42 v5.20 M606.31,171.35 h5.20 M608.91,168.75 v5.20 M618.06,171.18 h5.20 M620.66,168.58 v5.20 M629.11,165.41 h5.20 M631.71,162.81 v5.20 M606.13,167.15 h5.20 M608.73,164.55 v5.20 M617.62,166.28 h5.20 M620.22,163.68 v5.20 M625.80,159.75 h5.20 M628.40,157.15 v5.20 M605.72,163.73 h5.20 M608.32,161.13 v5.20 M615.76,161.74 h5.20 M618.36,159.14 v5.20 M621.55,153.03 h5.20 M624.15,150.43 v5.20 M606.13,164.25 h5.20 M608.73,161.65 v5.20 M613.84,158.64 h5.20 M616.44,156.04 v5.20 M615.45,150.00 h5.20 M618.05,147.40 v5.20 M592.99,179.32 h5.20 M595.59,176.72 v5.20 M604.22,164.66 h5.20 M606.82,162.06 v5.20 M608.73,147.46 h5.20 M611.33,144.86 v5.20 M609.70,184.72 h5.20 M612.30,182.12 v5.20 M609.22,166.09 h5.20 M611.82,163.49 v5.20 M601.81,149.15 h5.20 M604.41,146.55 v5.20 M620.34,181.71 h5.20 M622.94,179.11 v5.20 M611.07,165.43 h5.20 M613.67,162.83 v5.20 M596.67,153.90 h5.20 M599.27,151.30 v5.20 M627.57,175.29 h5.20 M630.17,172.69 v5.20 M612.12,164.59 h5.20 M614.72,161.99 v5.20 M592.55,158.76 h5.20 M595.15,156.16 v5.20 M628.78,172.94 h5.20 M631.38,170.34 v5.20 M610.67,165.85 h5.20 M613.27,163.25 v5.20 M588.75,162.67 h5.20 M591.35,160.07 v5.20 M627.14,177.52 h5.20 M629.74,174.92 v5.20 M607.94,170.10 h5.20 M610.54,167.50 v5.20 M586.68,164.39 h5.20 M589.28,161.79 v5.20 M600.57,174.97 h5.20 M603.17,172.37 v5.20 M593.62,169.68 h5.20 M596.22,167.08 v5.20 M585.02,165.77 h5.20 M587.62,163.17 v5.20 M594.81,178.10 h5.20 M597.41,175.50 v5.20 M589.91,171.93 h5.20 M592.51,169.33 v5.20 M582.17,168.14 h5.20 M584.77,165.54 v5.20 M589.93,181.36 h5.20 M592.53,178.76 v5.20 M586.05,174.75 h5.20 M588.65,172.15 v5.20 M578.63,171.08 h5.20 M581.23,168.48 v5.20 M585.46,184.35 h5.20 M588.06,181.75 v5.20 M582.04,177.71 h5.20 M584.64,175.11 v5.20 M574.72,173.81 h5.20 M577.32,171.21 v5.20 M581.05,187.30 h5.20 M583.65,184.70 v5.20 M577.88,180.55 h5.20 M580.48,177.95 v5.20 M570.55,176.47 h5.20 M573.15,173.87 v5.20 M576.85,190.38 h5.20 M579.45,187.78 v5.20 M573.70,183.43 h5.20 M576.30,180.83 v5.20 M566.29,179.19 h5.20 M568.89,176.59 v5.20 M572.76,193.50 h5.20 M575.36,190.90 v5.20 M569.52,186.35 h5.20 M572.12,183.75 v5.20 M562.04,181.90 h5.20 M564.64,179.30 v5.20 M568.66,196.64 h5.20 M571.26,194.04 v5.20 M565.35,189.27 h5.20 M567.95,186.67 v5.20 M558.34,184.20 h5.20 M560.94,181.60 v5.20 M564.59,199.75 h5.20 M567.19,197.15 v5.20 M561.47,191.97 h5.20 M564.07,189.37 v5.20 M553.67,187.10 h5.20 M556.27,184.50 v5.20 M562.26,203.20 h5.20 M564.86,200.60 v5.20 M557.96,195.15 h5.20 M560.56,192.55 v5.20 M548.94,190.04 h5.20 M551.54,187.44 v5.20 M560.62,206.03 h5.20 M563.22,203.43 v5.20 M554.78,198.03 h5.20 M557.38,195.43 v5.20 M544.41,193.40 h5.20 M547.01,190.80 v5.20 M559.27,208.36 h5.20 M561.87,205.76 v5.20 M551.84,200.88 h5.20 M554.44,198.28 v5.20 M539.74,196.98 h5.20 M542.34,194.38 v5.20 M558.04,210.49 h5.20 M560.64,207.89 v5.20 M548.89,203.73 h5.20 M551.49,201.13 v5.20 M534.90,200.68 h5.20 M537.50,198.08 v5.20 M556.50,213.14 h5.20 M559.10,210.54 v5.20 M545.70,206.91 h5.20 M548.30,204.31 v5.20 M531.12,204.16 h5.20 M533.72,201.56 v5.20 M554.14,216.16 h5.20 M556.74,213.56 v5.20 M542.63,210.16 h5.20 M545.23,207.56 v5.20 M527.15,207.97 h5.20 M529.75,205.37 v5.20 M550.65,219.65 h5.20 M553.25,217.05 v5.20 M538.90,213.81 h5.20 M541.50,211.21 v5.20 M523.24,211.72 h5.20 M525.84,209.12 v5.20 M546.99,223.31 h5.20 M549.59,220.71 v5.20 M535.12,217.51 h5.20 M537.72,214.91 v5.20 M521.12,216.02 h5.20 M523.72,213.42 v5.20 M543.12,227.18 h5.20 M545.72,224.58 v5.20 M532.12,221.60 h5.20 M534.72,219.00 v5.20 " stroke="#ff0000" stroke-width="1.8" fill="none"/>
<path d="M573.66,343.13 L574.71,342.28 L575.74,341.42 L576.77,340.57 L577.78,339.76 L578.76,338.99 L579.71,338.30 L580.58,337.73 L581.41,337.30 L582.34,337.02 L583.45,336.88 L584.70,336.71 L586.08,336.45 L587.44,336.18 L588.77,335.92 L590.09,335.66 L591.40,335.41 L592.71,335.17 L594.01,334.93 L595.31,334.71 L596.60,334.50 L597.87,334.31 L599.14,334.15 L600.41,334.02 L601.68,333.93 L602.97,333.85 L604.28,333.80 L605.61,333.76 L606.96,333.72 L608.32,333.68 L609.67,333.62 L611.00,333.56 L612.34,333.52 L613.70,333.50 L615.15,333.46 L616.68,333.36 L618.22,333.14 L619.73,332.79 L621.23,332.38 L622.73,331.91 L624.30,331.27 L625.90,330.38 L627.39,329.19 L628.63,327.74 L629.57,326.17 L630.26,324.61 L630.79,323.10 L631.22,321.64 L631.57,320.20 L631.87,318.77 L632.13,317.33 L632.35,315.87 L632.50,314.39 L632.59,312.90 L632.61,311.44 L632.60,310.00 L632.56,308.60 L632.50,307.23 L632.44,305.87 L632.38,304.52 L632.33,303.17 L632.28,301.81 L632.21,300.43 L632.13,299.05 L632.03,297.66 L631.91,296.25 L631.77,294.84 L631.59,293.43 L631.38,292.02 L631.14,290.62 L630.87,289.23 L630.58,287.86 L630.27,286.49 L629.94,285.13 L629.59,283.79 L629.23,282.45 L628.86,281.12 L628.48,279.79 L628.09,278.47 L627.68,277.14 L627.26,275.82 L626.82,274.50 L626.36,273.19 L625.90,271.90 L625.43,270.61 L624.96,269.33 L624.48,268.06 L624.01,266.80 L623.54,265.53 L623.06,264.25 L622.58,262.96 L622.07,261.68 L621.55,260.41 L621.04,259.16 L620.54,257.93 L620.06,256.72 L619.61,255.52 L619.20,254.32 L618.81,253.09 L618.44,251.84 L618.07,250.58 L617.71,249.31 L617.37,248.04 L617.04,246.77 L616.73,245.51 L616.44,244.26 L616.18,243.00 L615.95,241.76 L615.75,240.52 L615.60,239.28 L615.48,238.03 L615.39,236.77 L615.34,235.51 L615.32,234.24 L615.32,232.97 L615.36,231.69 L615.42,230.41 L615.51,229.13 L615.62,227.83 L615.75,226.54 L615.89,225.26 L616.06,223.98 L616.26,222.71 L616.48,221.43 L616.72,220.15 L616.98,218.86 L617.25,217.56 L617.53,216.26 L617.82,214.96 L618.11,213.64 L618.40,212.32 L618.69,210.99 L618.98,209.67 L619.26,208.35 L619.54,207.03 L619.83,205.72 L620.12,204.42 L620.41,203.11 L620.71,201.80 L621.01,200.48 L621.32,199.16 L621.62,197.84 L621.92,196.51 L622.21,195.18 L622.50,193.85 L622.78,192.50 L623.06,191.15 L623.32,189.80 L623.56,188.44 L623.80,187.10 L624.04,185.75 L624.26,184.39 L624.48,183.02 L624.68,181.64 L624.86,180.24 L625.02,178.83 L625.14,177.41 L625.23,175.98 L625.29,174.56 L625.31,173.14 L625.31,171.74 L625.29,170.33 L625.25,168.93 L625.19,167.52 L625.10,166.11 L624.98,164.69 L624.82,163.25 L624.62,161.79 L624.35,160.27 L623.97,158.67 L623.38,157.04 L622.56,155.45 L621.52,154.00 L620.36,152.76 L619.15,151.69 L617.85,150.63 L616.37,149.59 L614.59,148.80 L612.61,148.44 L610.68,148.45 L608.87,148.70 L607.13,149.17 L605.45,149.88 L603.89,150.83 L602.51,151.99 L601.33,153.25 L600.34,154.56 L599.48,155.89 L598.69,157.25 L598.00,158.63 L597.43,160.04 L596.94,161.40 L596.49,162.68 L596.05,163.90 L595.61,165.04 L595.15,166.09 L594.65,167.05 L594.07,167.93 L593.40,168.74 L592.66,169.52 L591.83,170.27 L590.93,170.98 L589.96,171.65 L588.92,172.31 L587.83,172.96 L586.71,173.61 L585.58,174.25 L584.44,174.87 L583.29,175.47 L582.13,176.06 L580.94,176.63 L579.75,177.20 L578.55,177.77 L577.34,178.33 L576.12,178.89 L574.90,179.44 L573.67,180.00 L572.44,180.55 L571.21,181.11 L569.98,181.66 L568.74,182.22 L567.51,182.79 L566.30,183.35 L565.10,183.89 L563.90,184.41 L562.69,184.91 L561.44,185.41 L560.16,185.93 L558.84,186.48 L557.50,187.10 L556.16,187.79 L554.86,188.56 L553.62,189.37 L552.43,190.21 L551.26,191.07 L550.11,191.96 L548.97,192.93 L547.86,193.95 L546.81,195.03 L545.81,196.15 L544.87,197.30 L543.98,198.48 L543.13,199.68 L542.35,200.90 L541.60,202.14 L540.89,203.36 L540.21,204.59 L539.55,205.81 L538.91,207.03 L538.27,208.25 L537.66,209.47 L537.04,210.69 L536.43,211.91 L535.83,213.13 L535.23,214.35 L534.64,215.57 L534.05,216.78 L533.46,217.98 L532.87,219.18 L532.26,220.38" fill="none" stroke="#ff7f0e" stroke-width="1.6" stroke-linejoin="round" />
<path d="M570.29,339.03 L571.34,338.18 L572.39,337.32 L573.44,336.45 L574.51,335.59 L575.62,334.72 L576.80,333.88 L578.08,333.06 L579.50,332.35 L580.98,331.89 L582.45,331.68 L583.83,331.48 L585.13,331.24 L586.43,330.98 L587.75,330.72 L589.08,330.46 L590.42,330.20 L591.75,329.95 L593.10,329.71 L594.44,329.48 L595.80,329.26 L597.17,329.06 L598.55,328.88 L599.94,328.74 L601.32,328.64 L602.70,328.56 L604.07,328.50 L605.43,328.46 L606.78,328.42 L608.13,328.38 L609.47,328.32 L610.83,328.26 L612.19,328.22 L613.53,328.21 L614.83,328.17 L616.07,328.10 L617.29,327.93 L618.50,327.64 L619.69,327.31 L620.86,326.95 L621.93,326.52 L622.89,326.02 L623.70,325.38 L624.36,324.59 L624.91,323.65 L625.36,322.59 L625.76,321.45 L626.10,320.25 L626.40,319.01 L626.67,317.75 L626.89,316.48 L627.09,315.22 L627.22,313.95 L627.30,312.68 L627.31,311.40 L627.30,310.09 L627.26,308.77 L627.20,307.44 L627.14,306.09 L627.09,304.74 L627.04,303.39 L626.98,302.05 L626.92,300.72 L626.84,299.39 L626.75,298.07 L626.64,296.76 L626.50,295.45 L626.34,294.15 L626.15,292.86 L625.92,291.57 L625.67,290.28 L625.40,288.99 L625.11,287.70 L624.79,286.42 L624.46,285.13 L624.12,283.84 L623.76,282.56 L623.39,281.28 L623.02,280.00 L622.63,278.73 L622.22,277.47 L621.80,276.21 L621.36,274.95 L620.91,273.69 L620.45,272.43 L619.99,271.17 L619.52,269.91 L619.04,268.65 L618.57,267.39 L618.11,266.13 L617.63,264.88 L617.14,263.64 L616.64,262.40 L616.12,261.15 L615.61,259.89 L615.11,258.60 L614.62,257.30 L614.17,255.99 L613.75,254.67 L613.36,253.35 L612.97,252.03 L612.60,250.72 L612.24,249.40 L611.90,248.07 L611.57,246.73 L611.26,245.38 L610.98,244.02 L610.72,242.64 L610.50,241.26 L610.33,239.86 L610.20,238.47 L610.10,237.07 L610.04,235.67 L610.02,234.28 L610.02,232.88 L610.06,231.49 L610.13,230.11 L610.23,228.73 L610.34,227.35 L610.48,225.98 L610.64,224.60 L610.82,223.23 L611.03,221.86 L611.27,220.50 L611.52,219.15 L611.78,217.81 L612.06,216.47 L612.35,215.14 L612.64,213.82 L612.93,212.50 L613.23,211.18 L613.51,209.87 L613.80,208.55 L614.08,207.23 L614.36,205.91 L614.65,204.58 L614.95,203.26 L615.25,201.94 L615.55,200.62 L615.85,199.30 L616.15,197.99 L616.45,196.67 L616.74,195.36 L617.03,194.05 L617.32,192.74 L617.59,191.44 L617.86,190.13 L618.11,188.82 L618.35,187.50 L618.58,186.18 L618.81,184.86 L619.03,183.55 L619.24,182.23 L619.43,180.92 L619.60,179.62 L619.74,178.31 L619.86,177.01 L619.94,175.71 L619.99,174.40 L620.01,173.09 L620.01,171.77 L619.99,170.45 L619.95,169.13 L619.89,167.81 L619.81,166.50 L619.70,165.20 L619.56,163.91 L619.39,162.64 L619.18,161.42 L618.91,160.26 L618.54,159.19 L618.04,158.22 L617.39,157.32 L616.59,156.49 L615.68,155.70 L614.78,154.95 L613.92,154.29 L613.00,153.86 L612.04,153.71 L611.02,153.74 L609.95,153.89 L608.89,154.18 L607.88,154.59 L606.96,155.15 L606.13,155.86 L605.36,156.70 L604.65,157.65 L603.99,158.67 L603.37,159.73 L602.82,160.84 L602.35,162.01 L601.91,163.23 L601.47,164.50 L601.00,165.80 L600.48,167.12 L599.89,168.46 L599.19,169.78 L598.36,171.05 L597.40,172.22 L596.36,173.31 L595.27,174.30 L594.12,175.21 L592.94,176.04 L591.74,176.80 L590.54,177.52 L589.35,178.21 L588.15,178.89 L586.94,179.55 L585.71,180.19 L584.49,180.81 L583.25,181.40 L582.02,181.99 L580.79,182.57 L579.56,183.14 L578.32,183.71 L577.09,184.27 L575.86,184.83 L574.62,185.38 L573.39,185.94 L572.17,186.49 L570.94,187.05 L569.71,187.61 L568.48,188.18 L567.24,188.74 L565.97,189.29 L564.71,189.81 L563.45,190.32 L562.21,190.82 L561.01,191.32 L559.85,191.85 L558.73,192.43 L557.64,193.07 L556.58,193.78 L555.52,194.52 L554.48,195.28 L553.46,196.07 L552.49,196.89 L551.56,197.75 L550.68,198.65 L549.84,199.59 L549.03,200.58 L548.26,201.60 L547.52,202.65 L546.83,203.74 L546.15,204.84 L545.49,205.98 L544.86,207.14 L544.22,208.31 L543.60,209.49 L542.99,210.67 L542.38,211.87 L541.78,213.06 L541.18,214.27 L540.58,215.47 L539.99,216.68 L539.40,217.89 L538.81,219.11 L538.21,220.33 L537.61,221.54 L537.00,222.75" fill="none" stroke="#2ca02c" stroke-width="1.5" stroke-linejoin="round" />
<path d="M572.26,341.43 L573.31,340.58 L574.35,339.72 L575.38,338.86 L576.42,338.03 L577.46,337.22 L578.50,336.47 L579.54,335.79 L580.61,335.25 L581.78,334.89 L583.03,334.72 L584.34,334.54 L585.68,334.29 L587.02,334.02 L588.35,333.76 L589.67,333.50 L590.99,333.25 L592.31,333.00 L593.63,332.76 L594.95,332.54 L596.27,332.32 L597.58,332.13 L598.90,331.96 L600.21,331.83 L601.53,331.73 L602.86,331.66 L604.20,331.60 L605.54,331.56 L606.89,331.52 L608.24,331.48 L609.59,331.42 L610.93,331.36 L612.28,331.32 L613.63,331.30 L615.02,331.27 L616.43,331.18 L617.84,330.98 L619.22,330.65 L620.59,330.28 L621.96,329.85 L623.32,329.30 L624.65,328.57 L625.86,327.61 L626.86,326.43 L627.63,325.12 L628.23,323.77 L628.70,322.42 L629.09,321.06 L629.43,319.70 L629.71,318.34 L629.96,316.98 L630.16,315.60 L630.31,314.21 L630.39,312.81 L630.41,311.42 L630.40,310.04 L630.36,308.67 L630.30,307.31 L630.24,305.96 L630.19,304.61 L630.13,303.26 L630.08,301.91 L630.01,300.55 L629.94,299.19 L629.84,297.83 L629.72,296.46 L629.58,295.10 L629.41,293.73 L629.21,292.37 L628.97,291.02 L628.71,289.67 L628.43,288.33 L628.12,286.99 L627.80,285.67 L627.46,284.34 L627.11,283.03 L626.74,281.72 L626.37,280.41 L625.98,279.10 L625.58,277.80 L625.17,276.50 L624.73,275.21 L624.29,273.92 L623.83,272.64 L623.36,271.37 L622.89,270.10 L622.42,268.83 L621.95,267.57 L621.47,266.30 L621.00,265.03 L620.52,263.76 L620.02,262.49 L619.51,261.23 L619.00,259.99 L618.49,258.74 L618.00,257.50 L617.54,256.26 L617.11,255.01 L616.71,253.74 L616.33,252.47 L615.96,251.18 L615.59,249.89 L615.24,248.60 L614.90,247.31 L614.59,246.02 L614.29,244.72 L614.02,243.43 L613.78,242.13 L613.57,240.83 L613.41,239.52 L613.29,238.21 L613.20,236.90 L613.14,235.58 L613.12,234.26 L613.12,232.93 L613.16,231.61 L613.23,230.29 L613.32,228.96 L613.43,227.63 L613.56,226.31 L613.71,224.99 L613.89,223.67 L614.09,222.36 L614.32,221.05 L614.56,219.74 L614.82,218.42 L615.10,217.11 L615.38,215.80 L615.67,214.48 L615.96,213.17 L616.25,211.85 L616.54,210.53 L616.83,209.20 L617.11,207.88 L617.39,206.57 L617.68,205.25 L617.97,203.94 L618.27,202.62 L618.57,201.31 L618.87,199.99 L619.17,198.68 L619.47,197.36 L619.77,196.04 L620.06,194.71 L620.35,193.39 L620.63,192.06 L620.90,190.73 L621.15,189.39 L621.40,188.05 L621.63,186.72 L621.87,185.38 L622.09,184.04 L622.30,182.69 L622.50,181.34 L622.68,179.98 L622.83,178.61 L622.95,177.24 L623.03,175.87 L623.09,174.49 L623.11,173.12 L623.11,171.75 L623.09,170.38 L623.05,169.01 L622.99,167.64 L622.90,166.27 L622.79,164.90 L622.64,163.52 L622.45,162.14 L622.20,160.75 L621.87,159.33 L621.37,157.94 L620.68,156.60 L619.80,155.38 L618.80,154.31 L617.71,153.36 L616.58,152.42 L615.35,151.54 L613.93,150.90 L612.37,150.62 L610.82,150.64 L609.32,150.86 L607.86,151.25 L606.46,151.83 L605.17,152.63 L604.01,153.60 L603.00,154.68 L602.13,155.84 L601.35,157.05 L600.63,158.28 L600.00,159.55 L599.47,160.86 L599.00,162.16 L598.56,163.44 L598.11,164.69 L597.63,165.90 L597.12,167.07 L596.53,168.18 L595.85,169.22 L595.06,170.19 L594.19,171.09 L593.26,171.94 L592.25,172.73 L591.19,173.47 L590.09,174.17 L588.96,174.85 L587.81,175.52 L586.65,176.18 L585.48,176.81 L584.30,177.43 L583.11,178.03 L581.90,178.61 L580.69,179.19 L579.48,179.76 L578.26,180.33 L577.03,180.89 L575.81,181.45 L574.58,182.00 L573.35,182.56 L572.12,183.11 L570.89,183.67 L569.65,184.23 L568.43,184.79 L567.21,185.35 L565.99,185.91 L564.76,186.44 L563.53,186.95 L562.28,187.45 L561.01,187.96 L559.74,188.49 L558.47,189.07 L557.22,189.72 L556.01,190.43 L554.85,191.20 L553.71,192.00 L552.60,192.82 L551.50,193.67 L550.43,194.57 L549.40,195.53 L548.42,196.53 L547.48,197.58 L546.60,198.66 L545.76,199.78 L544.95,200.91 L544.21,202.08 L543.49,203.26 L542.80,204.45 L542.14,205.65 L541.49,206.85 L540.86,208.05 L540.23,209.26 L539.62,210.47 L539.00,211.68 L538.40,212.89 L537.80,214.10 L537.21,215.32 L536.61,216.53 L536.02,217.74 L535.43,218.95 L534.84,220.16 L534.23,221.36" fill="none" stroke="#1f77b4" stroke-width="1.5" stroke-linejoin="round" />
<path d="M572.51,341.74 L573.56,340.89 L574.60,340.03 L575.64,339.17 L576.67,338.34 L577.70,337.54 L578.72,336.80 L579.73,336.14 L580.76,335.62 L581.88,335.28 L583.11,335.12 L584.40,334.93 L585.75,334.68 L587.10,334.41 L588.42,334.15 L589.74,333.89 L591.06,333.64 L592.38,333.40 L593.70,333.16 L595.01,332.93 L596.33,332.72 L597.63,332.53 L598.94,332.36 L600.25,332.23 L601.56,332.13 L602.88,332.06 L604.21,332.00 L605.55,331.96 L606.90,331.92 L608.26,331.88 L609.60,331.82 L610.95,331.76 L612.29,331.72 L613.64,331.70 L615.04,331.67 L616.47,331.57 L617.91,331.37 L619.31,331.04 L620.71,330.66 L622.10,330.22 L623.50,329.66 L624.88,328.90 L626.14,327.89 L627.18,326.67 L627.98,325.31 L628.60,323.93 L629.08,322.54 L629.48,321.17 L629.82,319.79 L630.10,318.42 L630.35,317.04 L630.56,315.65 L630.71,314.24 L630.79,312.83 L630.81,311.42 L630.80,310.03 L630.76,308.66 L630.70,307.30 L630.64,305.95 L630.59,304.60 L630.53,303.25 L630.48,301.89 L630.41,300.53 L630.33,299.17 L630.24,297.80 L630.12,296.43 L629.98,295.05 L629.81,293.68 L629.60,292.31 L629.37,290.94 L629.11,289.59 L628.82,288.24 L628.51,286.90 L628.19,285.57 L627.85,284.24 L627.50,282.92 L627.13,281.61 L626.75,280.30 L626.37,278.99 L625.97,277.68 L625.55,276.38 L625.11,275.08 L624.66,273.79 L624.20,272.51 L623.74,271.23 L623.27,269.96 L622.80,268.69 L622.32,267.43 L621.85,266.16 L621.38,264.89 L620.90,263.61 L620.40,262.34 L619.88,261.08 L619.37,259.84 L618.86,258.60 L618.38,257.36 L617.92,256.13 L617.49,254.88 L617.09,253.63 L616.71,252.35 L616.34,251.07 L615.98,249.79 L615.63,248.50 L615.29,247.21 L614.98,245.93 L614.68,244.64 L614.41,243.35 L614.17,242.06 L613.97,240.77 L613.81,239.48 L613.69,238.18 L613.60,236.87 L613.54,235.56 L613.52,234.25 L613.52,232.94 L613.56,231.63 L613.63,230.31 L613.72,228.99 L613.83,227.67 L613.96,226.35 L614.11,225.04 L614.28,223.73 L614.48,222.42 L614.71,221.12 L614.95,219.81 L615.21,218.50 L615.49,217.19 L615.77,215.88 L616.06,214.57 L616.35,213.25 L616.64,211.93 L616.93,210.61 L617.22,209.29 L617.50,207.97 L617.78,206.65 L618.07,205.34 L618.36,204.02 L618.66,202.71 L618.96,201.40 L619.26,200.08 L619.56,198.76 L619.86,197.44 L620.16,196.12 L620.45,194.80 L620.74,193.47 L621.02,192.14 L621.29,190.80 L621.55,189.46 L621.79,188.12 L622.03,186.79 L622.26,185.45 L622.49,184.10 L622.70,182.75 L622.90,181.39 L623.07,180.03 L623.22,178.65 L623.35,177.27 L623.43,175.89 L623.49,174.51 L623.51,173.12 L623.51,171.75 L623.49,170.37 L623.45,169.00 L623.39,167.62 L623.30,166.24 L623.19,164.86 L623.04,163.47 L622.85,162.08 L622.59,160.66 L622.25,159.21 L621.74,157.77 L621.02,156.39 L620.11,155.13 L619.08,154.03 L617.97,153.06 L616.81,152.10 L615.54,151.19 L614.05,150.52 L612.42,150.23 L610.80,150.24 L609.24,150.47 L607.73,150.87 L606.28,151.48 L604.94,152.30 L603.74,153.30 L602.70,154.42 L601.81,155.61 L601.01,156.84 L600.28,158.09 L599.63,159.38 L599.10,160.71 L598.63,162.02 L598.18,163.30 L597.73,164.54 L597.27,165.75 L596.76,166.89 L596.19,167.98 L595.52,168.99 L594.76,169.93 L593.92,170.81 L593.00,171.64 L592.01,172.41 L590.97,173.14 L589.88,173.84 L588.75,174.51 L587.61,175.17 L586.45,175.83 L585.29,176.46 L584.11,177.07 L582.93,177.67 L581.73,178.25 L580.52,178.83 L579.31,179.40 L578.09,179.96 L576.87,180.53 L575.64,181.08 L574.41,181.64 L573.18,182.19 L571.95,182.75 L570.72,183.30 L569.49,183.86 L568.26,184.42 L567.04,184.99 L565.83,185.54 L564.60,186.07 L563.37,186.58 L562.12,187.08 L560.86,187.59 L559.58,188.13 L558.30,188.71 L557.03,189.37 L555.80,190.09 L554.63,190.87 L553.48,191.67 L552.35,192.50 L551.25,193.36 L550.16,194.27 L549.12,195.24 L548.12,196.26 L547.18,197.32 L546.29,198.41 L545.43,199.54 L544.62,200.69 L543.87,201.86 L543.14,203.06 L542.45,204.25 L541.79,205.46 L541.14,206.66 L540.50,207.87 L539.87,209.07 L539.26,210.29 L538.65,211.50 L538.04,212.71 L537.44,213.93 L536.85,215.14 L536.25,216.36 L535.66,217.57 L535.07,218.78 L534.48,219.98 L533.87,221.18" fill="none" stroke="#d62728" stroke-width="1.5" stroke-linejoin="round" />
<path d="M571.37,340.35 L572.42,339.50 L573.46,338.63 L574.50,337.77 L575.56,336.93 L576.63,336.09 L577.73,335.30 L578.88,334.56 L580.11,333.94 L581.42,333.54 L582.77,333.35 L584.11,333.16 L585.43,332.91 L586.75,332.65 L588.08,332.39 L589.40,332.13 L590.73,331.87 L592.06,331.62 L593.39,331.39 L594.72,331.16 L596.06,330.94 L597.40,330.74 L598.74,330.57 L600.09,330.44 L601.44,330.34 L602.79,330.26 L604.14,330.20 L605.49,330.16 L606.84,330.12 L608.19,330.08 L609.54,330.02 L610.89,329.96 L612.24,329.92 L613.59,329.91 L614.93,329.87 L616.27,329.79 L617.59,329.60 L618.89,329.29 L620.18,328.94 L621.46,328.54 L622.69,328.05 L623.85,327.42 L624.88,326.60 L625.73,325.60 L626.40,324.46 L626.93,323.24 L627.37,321.98 L627.74,320.69 L628.06,319.39 L628.34,318.07 L628.57,316.75 L628.77,315.43 L628.92,314.09 L628.99,312.75 L629.01,311.41 L629.00,310.06 L628.96,308.72 L628.90,307.37 L628.84,306.02 L628.79,304.67 L628.74,303.32 L628.68,301.98 L628.62,300.63 L628.54,299.28 L628.44,297.94 L628.33,296.60 L628.19,295.26 L628.03,293.92 L627.83,292.59 L627.60,291.27 L627.34,289.94 L627.06,288.63 L626.76,287.31 L626.44,286.00 L626.11,284.70 L625.76,283.40 L625.40,282.10 L625.02,280.80 L624.64,279.51 L624.25,278.22 L623.84,276.94 L623.41,275.66 L622.96,274.39 L622.51,273.12 L622.05,271.85 L621.58,270.58 L621.11,269.32 L620.64,268.05 L620.16,266.79 L619.70,265.52 L619.22,264.26 L618.72,263.01 L618.21,261.76 L617.70,260.51 L617.19,259.26 L616.70,258.00 L616.22,256.73 L615.78,255.45 L615.37,254.16 L614.99,252.86 L614.61,251.57 L614.24,250.27 L613.89,248.96 L613.55,247.65 L613.22,246.34 L612.92,245.02 L612.65,243.69 L612.40,242.36 L612.19,241.02 L612.02,239.68 L611.89,238.33 L611.80,236.97 L611.74,235.62 L611.72,234.27 L611.72,232.91 L611.76,231.56 L611.83,230.21 L611.92,228.85 L612.04,227.51 L612.17,226.16 L612.32,224.82 L612.50,223.47 L612.71,222.14 L612.94,220.80 L613.19,219.47 L613.45,218.15 L613.73,216.82 L614.01,215.50 L614.30,214.18 L614.59,212.86 L614.89,211.55 L615.17,210.23 L615.46,208.91 L615.74,207.59 L616.02,206.27 L616.31,204.95 L616.60,203.63 L616.90,202.31 L617.20,201.00 L617.50,199.68 L617.81,198.36 L618.10,197.05 L618.40,195.73 L618.69,194.41 L618.98,193.10 L619.26,191.78 L619.53,190.46 L619.78,189.13 L620.02,187.80 L620.26,186.48 L620.49,185.15 L620.71,183.82 L620.92,182.49 L621.11,181.15 L621.29,179.82 L621.43,178.48 L621.55,177.14 L621.64,175.80 L621.69,174.45 L621.71,173.11 L621.71,171.76 L621.69,170.41 L621.65,169.07 L621.59,167.72 L621.51,166.38 L621.40,165.04 L621.25,163.70 L621.07,162.37 L620.84,161.05 L620.53,159.75 L620.09,158.50 L619.49,157.33 L618.71,156.26 L617.80,155.29 L616.79,154.42 L615.77,153.57 L614.70,152.78 L613.51,152.24 L612.22,152.02 L610.91,152.04 L609.60,152.23 L608.32,152.57 L607.10,153.08 L605.98,153.77 L604.97,154.62 L604.07,155.59 L603.27,156.66 L602.54,157.78 L601.87,158.94 L601.27,160.13 L600.77,161.38 L600.32,162.64 L599.87,163.92 L599.41,165.19 L598.92,166.45 L598.37,167.70 L597.73,168.91 L596.98,170.05 L596.12,171.11 L595.17,172.09 L594.16,173.01 L593.09,173.85 L591.98,174.63 L590.84,175.36 L589.67,176.06 L588.50,176.73 L587.32,177.40 L586.14,178.05 L584.94,178.67 L583.73,179.28 L582.51,179.87 L581.29,180.46 L580.07,181.03 L578.84,181.60 L577.62,182.16 L576.39,182.72 L575.16,183.28 L573.92,183.83 L572.69,184.39 L571.46,184.94 L570.23,185.50 L569.01,186.06 L567.78,186.63 L566.55,187.19 L565.31,187.72 L564.06,188.24 L562.81,188.75 L561.56,189.25 L560.32,189.77 L559.09,190.32 L557.90,190.94 L556.75,191.62 L555.63,192.36 L554.53,193.14 L553.44,193.93 L552.38,194.75 L551.36,195.62 L550.37,196.53 L549.44,197.49 L548.55,198.49 L547.70,199.53 L546.89,200.60 L546.11,201.69 L545.39,202.83 L544.69,203.98 L544.02,205.14 L543.37,206.32 L542.72,207.51 L542.10,208.70 L541.47,209.90 L540.87,211.10 L540.26,212.30 L539.66,213.51 L539.06,214.72 L538.46,215.93 L537.87,217.15 L537.28,218.36 L536.69,219.57 L536.09,220.78 L535.48,221.99" fill="none" stroke="#9467bd" stroke-width="2.6" stroke-linejoin="round" />
<path d="M585.50,328.20 L588.60,346.20" fill="none" stroke="#000000" stroke-width="2.4" stroke-linejoin="round" />
<path d="M582.90,328.20 h5.20 M585.50,325.60 v5.20 M586.00,346.20 h5.20 M588.60,343.60 v5.20 M583.46,331.44 h5.20 M586.06,328.84 v5.20 M584.14,335.40 h5.20 M586.74,332.80 v5.20 " stroke="#000000" stroke-width="2.0" fill="none"/>
<path d="M590.50,327.20 L592.60,346.60" fill="none" stroke="#0000ff" stroke-width="2.4" stroke-linejoin="round" />
<path d="M587.90,327.20 h5.20 M590.50,324.60 v5.20 M590.00,346.60 h5.20 M592.60,344.00 v5.20 M588.28,330.69 h5.20 M590.88,328.09 v5.20 M588.74,334.96 h5.20 M591.34,332.36 v5.20 " stroke="#0000ff" stroke-width="2.0" fill="none"/>
<path d="M595.50,327.20 L597.40,345.60" fill="none" stroke="#cc00cc" stroke-width="2.4" stroke-linejoin="round" />
<path d="M592.90,327.20 h5.20 M595.50,324.60 v5.20 M594.80,345.60 h5.20 M597.40,343.00 v5.20 M593.24,330.51 h5.20 M595.84,327.91 v5.20 M593.66,334.56 h5.20 M596.26,331.96 v5.20 " stroke="#cc00cc" stroke-width="2.0" fill="none"/>
<path d="M370.5,138.0 L370.5,356.5 L790.5,356.5" fill="none" stroke="#000" stroke-width="1.1"/>
<path d="M397.50,356.5 v4.9" stroke="#000" stroke-width="1.1"/>
<text x="397.50" y="376.70" font-size="13.9" fill="#000" text-anchor="middle" textLength="43.18" lengthAdjust="spacingAndGlyphs" >&#8722;2000</text>
<path d="M447.50,356.5 v4.9" stroke="#000" stroke-width="1.1"/>
<text x="447.50" y="376.70" font-size="13.9" fill="#000" text-anchor="middle" textLength="43.18" lengthAdjust="spacingAndGlyphs" >&#8722;1000</text>
<path d="M496.50,356.5 v4.9" stroke="#000" stroke-width="1.1"/>
<text x="496.50" y="376.70" font-size="13.9" fill="#000" text-anchor="middle" textLength="8.12" lengthAdjust="spacingAndGlyphs" >0</text>
<path d="M546.50,356.5 v4.9" stroke="#000" stroke-width="1.1"/>
<text x="546.50" y="376.70" font-size="13.9" fill="#000" text-anchor="middle" textLength="32.48" lengthAdjust="spacingAndGlyphs" >1000</text>
<path d="M596.50,356.5 v4.9" stroke="#000" stroke-width="1.1"/>
<text x="596.50" y="376.70" font-size="13.9" fill="#000" text-anchor="middle" textLength="32.48" lengthAdjust="spacingAndGlyphs" >2000</text>
<path d="M646.50,356.5 v4.9" stroke="#000" stroke-width="1.1"/>
<text x="646.50" y="376.70" font-size="13.9" fill="#000" text-anchor="middle" textLength="32.48" lengthAdjust="spacingAndGlyphs" >3000</text>
<path d="M695.50,356.5 v4.9" stroke="#000" stroke-width="1.1"/>
<text x="695.50" y="376.70" font-size="13.9" fill="#000" text-anchor="middle" textLength="32.48" lengthAdjust="spacingAndGlyphs" >4000</text>
<path d="M745.50,356.5 v4.9" stroke="#000" stroke-width="1.1"/>
<text x="745.50" y="376.70" font-size="13.9" fill="#000" text-anchor="middle" textLength="32.48" lengthAdjust="spacingAndGlyphs" >5000</text>
<path d="M370.5,317.50 h-4.9" stroke="#000" stroke-width="1.1"/>
<text x="359.00" y="322.50" font-size="13.9" fill="#000" text-anchor="end" textLength="32.30" lengthAdjust="spacingAndGlyphs" >1000</text>
<path d="M370.5,267.50 h-4.9" stroke="#000" stroke-width="1.1"/>
<text x="359.00" y="272.50" font-size="13.9" fill="#000" text-anchor="end" textLength="32.30" lengthAdjust="spacingAndGlyphs" >2000</text>
<path d="M370.5,217.50 h-4.9" stroke="#000" stroke-width="1.1"/>
<text x="359.00" y="222.50" font-size="13.9" fill="#000" text-anchor="end" textLength="32.30" lengthAdjust="spacingAndGlyphs" >3000</text>
<path d="M370.5,167.50 h-4.9" stroke="#000" stroke-width="1.1"/>
<text x="359.00" y="172.50" font-size="13.9" fill="#000" text-anchor="end" textLength="32.30" lengthAdjust="spacingAndGlyphs" >4000</text>
<text x="579.60" y="398.80" font-size="18" fill="#008000" text-anchor="middle" textLength="45.50" lengthAdjust="spacingAndGlyphs" >X (m)</text>
<text x="0" y="0" font-size="18" fill="#008000" text-anchor="middle" textLength="42.5" lengthAdjust="spacingAndGlyphs" transform="translate(314.3,247.7) rotate(-90)">Y (m)</text>
<text x="307.2" y="400" font-size="34" fill="#cc0000" stroke="#ffff00" stroke-width="3.2" paint-order="stroke" stroke-linejoin="round">2</text>
<path d="M1309.50,134.30 L1309.50,372.50" stroke="#a0a0a0" stroke-width="1.0" stroke-dasharray="2.6,1.1"/>
<path d="M1247.50,134.30 L1247.50,372.50" stroke="#a0a0a0" stroke-width="1.0" stroke-dasharray="2.6,1.1"/>
<path d="M1186.50,134.30 L1186.50,372.50" stroke="#a0a0a0" stroke-width="1.0" stroke-dasharray="2.6,1.1"/>
<path d="M1124.50,134.30 L1124.50,372.50" stroke="#a0a0a0" stroke-width="1.0" stroke-dasharray="2.6,1.1"/>
<path d="M1063.50,134.30 L1063.50,372.50" stroke="#a0a0a0" stroke-width="1.0" stroke-dasharray="2.6,1.1"/>
<path d="M1001.50,134.30 L1001.50,372.50" stroke="#a0a0a0" stroke-width="1.0" stroke-dasharray="2.6,1.1"/>
<path d="M940.50,134.30 L940.50,372.50" stroke="#a0a0a0" stroke-width="1.0" stroke-dasharray="2.6,1.1"/>
<path d="M903.50,352.50 L1340.00,352.50" stroke="#a0a0a0" stroke-width="1.0" stroke-dasharray="2.6,1.1"/>
<path d="M903.50,313.50 L1340.00,313.50" stroke="#a0a0a0" stroke-width="1.0" stroke-dasharray="2.6,1.1"/>
<path d="M903.50,274.50 L1340.00,274.50" stroke="#a0a0a0" stroke-width="1.0" stroke-dasharray="2.6,1.1"/>
<path d="M903.50,234.50 L1340.00,234.50" stroke="#a0a0a0" stroke-width="1.0" stroke-dasharray="2.6,1.1"/>
<path d="M903.50,195.50 L1340.00,195.50" stroke="#a0a0a0" stroke-width="1.0" stroke-dasharray="2.6,1.1"/>
<path d="M903.50,156.50 L1340.00,156.50" stroke="#a0a0a0" stroke-width="1.0" stroke-dasharray="2.6,1.1"/>
<path d="M903.50,320.13 L903.50,189.01 M909.65,324.11 L909.65,193.77 M915.80,322.78 L915.80,182.38 M921.94,329.40 L921.94,175.23 M928.09,331.26 L928.09,182.38 M934.24,330.20 L934.24,218.94 M940.39,325.43 L940.39,239.34 M946.54,322.78 L946.54,243.31 M952.68,321.46 L952.68,251.26 M958.83,318.81 L958.83,252.58 M964.98,324.11 L964.98,252.58 M971.13,322.78 L971.13,254.44 M977.28,324.11 L977.28,231.39 M983.42,328.61 L983.42,232.72 M989.57,328.08 L989.57,235.36 M995.72,326.75 L995.72,236.69 M1001.87,328.61 L1001.87,258.68 M1008.02,325.43 L1008.02,262.38 M1014.16,325.43 L1014.16,266.62 M1020.31,324.11 L1020.31,266.62 M1026.46,325.43 L1026.46,264.50 M1032.61,326.75 L1032.61,260.53 M1038.76,328.61 L1038.76,247.28 M1051.05,324.11 L1051.05,255.23 M1057.20,320.13 L1057.20,269.27 M1063.35,322.25 L1063.35,271.13 M1069.50,322.78 L1069.50,275.10 M1075.64,324.11 L1075.64,276.42 M1081.79,326.75 L1081.79,277.75 M1087.94,327.55 L1087.94,254.44 M1094.09,325.43 L1094.09,253.91 M1100.24,326.75 L1100.24,214.70 M1106.38,328.61 L1106.38,213.64 M1112.53,330.20 L1112.53,241.46 M1118.68,329.40 L1118.68,214.70 M1124.83,331.26 L1124.83,211.52 M1130.98,332.85 L1130.98,265.83 M1137.12,333.91 L1137.12,263.18 M1143.27,334.70 L1143.27,268.48 M1149.42,335.50 L1149.42,239.34 M1155.57,336.03 L1155.57,261.32 M1161.72,336.03 L1161.72,268.48 M1167.86,335.50 L1167.86,271.13 M1174.01,334.70 L1174.01,268.48 M1180.16,333.91 L1180.16,266.62 M1186.31,334.70 L1186.31,274.57 M1192.46,338.15 L1192.46,273.77 M1198.60,343.97 L1198.60,281.72 M1204.75,343.44 L1204.75,260.53 M1210.90,346.09 L1210.90,258.68 M1217.05,349.27 L1217.05,252.58 M1223.20,346.09 L1223.20,283.58 M1229.34,347.95 L1229.34,262.38 M1235.49,349.27 L1235.49,243.31 M1241.64,355.62 L1241.64,263.44 M1247.79,352.50 L1247.79,275.00 M1253.94,357.19 L1253.94,245.62 M1260.08,346.25 L1260.08,242.19 M1266.23,347.81 L1266.23,258.12 M1278.53,343.75 L1278.53,273.75 M1284.68,344.69 L1284.68,283.12 M1290.82,346.25 L1290.82,282.19 M1296.97,350.00 L1296.97,285.31 M1303.12,352.50 L1303.12,298.44 M1309.27,352.50 L1309.27,289.38 M1315.42,348.75 L1315.42,292.19 M1321.56,354.06 L1321.56,288.44 M1327.71,355.62 L1327.71,293.12 M1333.86,357.19 L1333.86,294.06 M1340.01,360.31 L1340.01,294.69 " stroke="#ff0000" stroke-width="1.5" fill="none"/>
<path d="M1043.90,324.11 L1043.90,216.82 M1272.38,346.25 L1272.38,145.62 " stroke="#ff0000" stroke-width="2.6" fill="none"/>
<path d="M903.50,320.13 L909.65,324.11 L915.80,322.78 L921.94,329.40 L928.09,331.26 L934.24,330.20 L940.39,325.43 L946.54,322.78 L952.68,321.46 L958.83,318.81 L964.98,324.11 L971.13,322.78 L977.28,324.11 L983.42,328.61 L989.57,328.08 L995.72,326.75 L1001.87,328.61 L1008.02,325.43 L1014.16,325.43 L1020.31,324.11 L1026.46,325.43 L1032.61,326.75 L1038.76,328.61 L1044.90,324.11 L1051.05,324.11 L1057.20,320.13 L1063.35,322.25 L1069.50,322.78 L1075.64,324.11 L1081.79,326.75 L1087.94,327.55 L1094.09,325.43 L1100.24,326.75 L1106.38,328.61 L1112.53,330.20 L1118.68,329.40 L1124.83,331.26 L1130.98,332.85 L1137.12,333.91 L1143.27,334.70 L1149.42,335.50 L1155.57,336.03 L1161.72,336.03 L1167.86,335.50 L1174.01,334.70 L1180.16,333.91 L1186.31,334.70 L1192.46,338.15 L1198.60,343.97 L1204.75,343.44 L1210.90,346.09 L1217.05,349.27 L1223.20,346.09 L1229.34,347.95 L1235.49,349.27 L1241.64,355.62 L1247.79,352.50 L1253.94,357.19 L1260.08,346.25 L1266.23,347.81 L1272.38,346.25 L1278.53,343.75 L1284.68,344.69 L1290.82,346.25 L1296.97,350.00 L1303.12,352.50 L1309.27,352.50 L1315.42,348.75 L1321.56,354.06 L1327.71,355.62 L1333.86,357.19 L1340.01,360.31" fill="none" stroke="#d0d0d0" stroke-width="2.2" stroke-linejoin="round" />
<path d="M903.50,320.13 L909.65,324.11 L915.80,322.78 L921.94,329.40 L928.09,331.26 L934.24,330.20 L940.39,325.43 L946.54,322.78 L952.68,321.46 L958.83,318.81 L964.98,324.11 L971.13,322.78 L977.28,324.11 L983.42,328.61 L989.57,328.08 L995.72,326.75 L1001.87,328.61 L1008.02,325.43 L1014.16,325.43 L1020.31,324.11 L1026.46,325.43 L1032.61,326.75 L1038.76,328.61 L1044.90,324.11 L1051.05,324.11 L1057.20,320.13 L1063.35,322.25 L1069.50,322.78 L1075.64,324.11 L1081.79,326.75 L1087.94,327.55 L1094.09,325.43 L1100.24,326.75 L1106.38,328.61 L1112.53,330.20 L1118.68,329.40 L1124.83,331.26 L1130.98,332.85 L1137.12,333.91 L1143.27,334.70 L1149.42,335.50 L1155.57,336.03 L1161.72,336.03 L1167.86,335.50 L1174.01,334.70 L1180.16,333.91 L1186.31,334.70 L1192.46,338.15 L1198.60,343.97 L1204.75,343.44 L1210.90,346.09 L1217.05,349.27 L1223.20,346.09 L1229.34,347.95 L1235.49,349.27 L1241.64,355.62 L1247.79,352.50 L1253.94,357.19 L1260.08,346.25 L1266.23,347.81 L1272.38,346.25 L1278.53,343.75 L1284.68,344.69 L1290.82,346.25 L1296.97,350.00 L1303.12,352.50 L1309.27,352.50 L1315.42,348.75 L1321.56,354.06 L1327.71,355.62 L1333.86,357.19 L1340.01,360.31" fill="none" stroke="#e03030" stroke-width="1.4" stroke-linejoin="round" stroke-dasharray="4,2.5" />
<path d="M903.50,313.51 L909.65,321.46 L915.80,313.51 L921.94,309.54 L928.09,314.83 L934.24,313.51 L940.39,322.25 L946.54,313.51 L952.68,312.72 L958.83,312.72 L964.98,313.51 L971.13,313.51 L977.28,313.51 L983.42,314.83 L989.57,317.48 L995.72,320.13 L1001.87,322.25 L1008.02,320.13 L1014.16,320.13 L1020.31,320.13 L1026.46,319.60 L1032.61,322.78 L1038.76,322.78 L1044.90,320.66 L1051.05,319.60 L1057.20,316.16 L1063.35,316.95 L1069.50,318.01 L1075.64,320.13 L1081.79,322.25 L1087.94,322.78 L1094.09,320.13 L1100.24,324.11 L1106.38,325.96 L1112.53,326.75 L1118.68,322.78 L1124.83,328.61 L1130.98,329.40 L1137.12,328.61 L1143.27,330.73 L1149.42,331.26 L1155.57,328.61 L1161.72,328.08 L1167.86,327.55 L1174.01,328.61 L1180.16,332.05 L1186.31,335.50 L1192.46,340.79 L1198.60,341.85 L1204.75,343.97 L1210.90,341.85 L1217.05,340.00 L1223.20,338.15 L1229.34,346.62 L1235.49,343.97 L1241.64,346.25 L1247.79,337.50 L1253.94,336.25 L1260.08,335.31 L1266.23,340.00 L1272.38,336.88 L1278.53,342.50 L1284.68,342.50 L1290.82,344.69 L1296.97,346.25 L1303.12,348.75 L1309.27,347.81 L1315.42,343.75 L1321.56,352.50 L1327.71,350.00 L1333.86,354.06 L1340.01,355.62" fill="none" stroke="#9467bd" stroke-width="1.5" stroke-linejoin="round" />
<path d="M903.50,312.19 L909.65,304.77 L915.80,313.51 L921.94,314.83 L928.09,315.36 L934.24,314.83 L940.39,314.83 L946.54,313.51 L952.68,316.95 L958.83,314.83 L964.98,314.83 L971.13,313.51 L977.28,318.81 L983.42,322.78 L989.57,322.78 L995.72,322.78 L1001.87,324.11 L1008.02,322.78 L1014.16,320.13 L1020.31,320.13 L1026.46,318.81 L1032.61,324.90 L1038.76,322.78 L1044.90,320.13 L1051.05,318.81 L1057.20,312.72 L1063.35,313.51 L1069.50,316.95 L1075.64,320.13 L1081.79,321.46 L1087.94,320.13 L1094.09,316.16 L1100.24,314.83 L1106.38,323.31 L1112.53,319.60 L1118.68,321.46 L1124.83,324.11 L1130.98,328.61 L1137.12,328.61 L1143.27,330.73 L1149.42,332.05 L1155.57,330.20 L1161.72,329.40 L1167.86,330.20 L1174.01,331.26 L1180.16,330.20 L1186.31,334.70 L1192.46,340.00 L1198.60,339.21 L1204.75,338.15 L1210.90,341.85 L1217.05,336.03 L1223.20,337.35 L1229.34,345.30 L1235.49,351.92 L1241.64,352.50 L1247.79,346.25 L1253.94,343.12 L1260.08,342.50 L1266.23,338.44 L1272.38,329.06 L1278.53,340.00 L1284.68,339.38 L1290.82,344.69 L1296.97,343.75 L1303.12,347.81 L1309.27,346.25 L1315.42,343.12 L1321.56,349.38 L1327.71,352.50 L1333.86,355.62 L1340.01,357.19" fill="none" stroke="#1f77b4" stroke-width="1.5" stroke-linejoin="round" />
<path d="M903.50,273.77 L909.65,281.72 L915.80,284.37 L921.94,284.37 L928.09,285.17 L934.24,285.17 L940.39,285.17 L946.54,287.81 L952.68,284.37 L958.83,277.75 L964.98,269.80 L971.13,262.38 L977.28,263.97 L983.42,269.80 L989.57,270.33 L995.72,268.48 L1001.87,268.48 L1008.02,267.95 L1014.16,269.80 L1020.31,270.33 L1026.46,271.13 L1032.61,261.85 L1038.76,247.28 L1043.10,300.00 L1045.00,243.75 L1051.05,253.91 L1057.20,267.15 L1063.35,277.75 L1069.50,280.40 L1075.64,281.72 L1081.79,282.52 L1087.94,283.05 L1094.09,283.05 L1100.24,284.37 L1106.38,285.17 L1112.53,298.41 L1118.68,300.26 L1124.83,309.54 L1130.98,312.19 L1137.12,309.01 L1143.27,310.07 L1149.42,306.89 L1155.57,307.42 L1161.72,307.42 L1167.86,304.77 L1174.01,306.36 L1180.16,309.54 L1186.31,311.66 L1192.46,316.16 L1198.60,305.56 L1204.75,301.06 L1210.90,305.56 L1217.05,319.60 L1223.20,302.12 L1229.34,306.36 L1235.49,309.01 L1241.64,308.75 L1247.79,311.25 L1253.94,308.75 L1260.08,310.31 L1266.23,311.25 L1272.38,317.50 L1278.53,310.31 L1284.68,313.44 L1290.82,325.94 L1296.97,327.50 L1303.12,327.50 L1309.27,329.06 L1315.42,323.75 L1321.56,324.38 L1327.71,325.94 L1333.86,327.50 L1340.01,329.06" fill="none" stroke="#ff7f0e" stroke-width="1.5" stroke-linejoin="round" />
<path d="M903.50,273.77 L909.65,277.75 L915.80,285.70 L921.94,285.17 L928.09,285.17 L934.24,285.17 L940.39,285.70 L946.54,288.87 L952.68,289.14 L958.83,290.99 L964.98,292.32 L971.13,293.11 L977.28,289.67 L983.42,290.46 L989.57,287.02 L995.72,289.14 L1001.87,288.87 L1008.02,287.81 L1014.16,289.67 L1020.31,287.02 L1026.46,286.23 L1032.61,286.23 L1038.76,286.23 L1044.90,288.87 L1051.05,285.17 L1057.20,281.72 L1063.35,280.40 L1069.50,284.37 L1075.64,287.02 L1081.79,292.32 L1087.94,288.34 L1094.09,285.70 L1100.24,283.58 L1106.38,284.37 L1112.53,287.02 L1118.68,290.46 L1124.83,287.81 L1130.98,290.99 L1137.12,301.06 L1143.27,302.12 L1149.42,302.12 L1155.57,301.59 L1161.72,301.06 L1167.86,302.12 L1174.01,306.89 L1180.16,310.86 L1186.31,310.86 L1192.46,311.66 L1198.60,307.42 L1204.75,305.56 L1210.90,312.72 L1217.05,313.51 L1223.20,308.21 L1229.34,305.56 L1235.49,309.54 L1241.64,308.75 L1247.79,310.31 L1253.94,292.19 L1260.08,293.12 L1266.23,298.75 L1272.38,298.75 L1272.98,307.80 L1278.53,308.75 L1284.68,306.25 L1290.82,315.00 L1296.97,318.12 L1303.12,317.50 L1309.27,316.56 L1315.42,318.12 L1321.56,322.81 L1327.71,326.88 L1333.86,329.06 L1340.01,329.06" fill="none" stroke="#2ca02c" stroke-width="1.5" stroke-linejoin="round" />
<path d="M921.94,329.40 L921.94,175.23" stroke="#000" stroke-width="2.4" stroke-dasharray="5,2.2"/>
<path d="M928.09,332.26 L928.09,182.38" stroke="#0000ff" stroke-width="3"/>
<path d="M934.24,330.20 L934.24,218.94" stroke="#cc00cc" stroke-width="2.4" stroke-dasharray="5,2.2"/>
<path d="M903.5,134.3 L903.5,372.5 L1340.0,372.5" fill="none" stroke="#000" stroke-width="1.1"/>
<path d="M1309.50,372.5 v4.9" stroke="#000" stroke-width="1.1"/>
<text x="1309.50" y="393.60" font-size="13.9" fill="#000" text-anchor="middle" textLength="32.30" lengthAdjust="spacingAndGlyphs" >1000</text>
<path d="M1247.50,372.5 v4.9" stroke="#000" stroke-width="1.1"/>
<text x="1247.50" y="393.60" font-size="13.9" fill="#000" text-anchor="middle" textLength="32.30" lengthAdjust="spacingAndGlyphs" >2000</text>
<path d="M1186.50,372.5 v4.9" stroke="#000" stroke-width="1.1"/>
<text x="1186.50" y="393.60" font-size="13.9" fill="#000" text-anchor="middle" textLength="32.30" lengthAdjust="spacingAndGlyphs" >3000</text>
<path d="M1124.50,372.5 v4.9" stroke="#000" stroke-width="1.1"/>
<text x="1124.50" y="393.60" font-size="13.9" fill="#000" text-anchor="middle" textLength="32.30" lengthAdjust="spacingAndGlyphs" >4000</text>
<path d="M1063.50,372.5 v4.9" stroke="#000" stroke-width="1.1"/>
<text x="1063.50" y="393.60" font-size="13.9" fill="#000" text-anchor="middle" textLength="32.30" lengthAdjust="spacingAndGlyphs" >5000</text>
<path d="M1001.50,372.5 v4.9" stroke="#000" stroke-width="1.1"/>
<text x="1001.50" y="393.60" font-size="13.9" fill="#000" text-anchor="middle" textLength="32.30" lengthAdjust="spacingAndGlyphs" >6000</text>
<path d="M940.50,372.5 v4.9" stroke="#000" stroke-width="1.1"/>
<text x="940.50" y="393.60" font-size="13.9" fill="#000" text-anchor="middle" textLength="32.30" lengthAdjust="spacingAndGlyphs" >7000</text>
<path d="M903.5,352.50 h-4.9" stroke="#000" stroke-width="1.1"/>
<text x="892.20" y="357.50" font-size="13.9" fill="#000" text-anchor="end" textLength="23.50" lengthAdjust="spacingAndGlyphs" >130</text>
<path d="M903.5,313.50 h-4.9" stroke="#000" stroke-width="1.1"/>
<text x="892.20" y="318.50" font-size="13.9" fill="#000" text-anchor="end" textLength="23.50" lengthAdjust="spacingAndGlyphs" >135</text>
<path d="M903.5,274.50 h-4.9" stroke="#000" stroke-width="1.1"/>
<text x="892.20" y="279.50" font-size="13.9" fill="#000" text-anchor="end" textLength="23.50" lengthAdjust="spacingAndGlyphs" >140</text>
<path d="M903.5,234.50 h-4.9" stroke="#000" stroke-width="1.1"/>
<text x="892.20" y="239.50" font-size="13.9" fill="#000" text-anchor="end" textLength="23.50" lengthAdjust="spacingAndGlyphs" >145</text>
<path d="M903.5,195.50 h-4.9" stroke="#000" stroke-width="1.1"/>
<text x="892.20" y="200.50" font-size="13.9" fill="#000" text-anchor="end" textLength="23.50" lengthAdjust="spacingAndGlyphs" >150</text>
<path d="M903.5,156.50 h-4.9" stroke="#000" stroke-width="1.1"/>
<text x="892.20" y="161.50" font-size="13.9" fill="#000" text-anchor="end" textLength="23.50" lengthAdjust="spacingAndGlyphs" >155</text>
<text x="1121.90" y="414.00" font-size="18" fill="#008000" text-anchor="middle" textLength="55.00" lengthAdjust="spacingAndGlyphs" >Kp (m)</text>
<text x="0" y="0" font-size="18" fill="#008000" text-anchor="middle" textLength="88.5" lengthAdjust="spacingAndGlyphs" transform="translate(857.0,254.3) rotate(-90)">Height (m)</text>
<text x="847" y="400" font-size="34" fill="#cc0000" stroke="#ffff00" stroke-width="3.2" paint-order="stroke" stroke-linejoin="round">3</text>
<path d="M519.50,478.00 L519.50,716.50" stroke="#a0a0a0" stroke-width="1.0" stroke-dasharray="2.6,1.1"/>
<path d="M644.50,478.00 L644.50,716.50" stroke="#a0a0a0" stroke-width="1.0" stroke-dasharray="2.6,1.1"/>
<path d="M769.50,478.00 L769.50,716.50" stroke="#a0a0a0" stroke-width="1.0" stroke-dasharray="2.6,1.1"/>
<path d="M893.50,478.00 L893.50,716.50" stroke="#a0a0a0" stroke-width="1.0" stroke-dasharray="2.6,1.1"/>
<path d="M1018.50,478.00 L1018.50,716.50" stroke="#a0a0a0" stroke-width="1.0" stroke-dasharray="2.6,1.1"/>
<path d="M1143.50,478.00 L1143.50,716.50" stroke="#a0a0a0" stroke-width="1.0" stroke-dasharray="2.6,1.1"/>
<path d="M1268.50,478.00 L1268.50,716.50" stroke="#a0a0a0" stroke-width="1.0" stroke-dasharray="2.6,1.1"/>
<path d="M475.50,680.50 L1324.10,680.50" stroke="#a0a0a0" stroke-width="1.0" stroke-dasharray="2.6,1.1"/>
<path d="M475.50,625.50 L1324.10,625.50" stroke="#a0a0a0" stroke-width="1.0" stroke-dasharray="2.6,1.1"/>
<path d="M475.50,571.50 L1324.10,571.50" stroke="#a0a0a0" stroke-width="1.0" stroke-dasharray="2.6,1.1"/>
<path d="M475.50,517.50 L1324.10,517.50" stroke="#a0a0a0" stroke-width="1.0" stroke-dasharray="2.6,1.1"/>
<path d="M513.30,488.30 L597.20,530.40 L626.70,613.50 L627.30,637.00 L644.10,641.20 L667.70,678.10 L681.80,686.70 L701.40,703.20 L713.20,696.90 L749.30,691.40 L755.50,685.10 L766.50,682.80 L802.60,682.80 L830.00,648.20 L842.00,639.30 L860.00,621.00 L873.60,601.50 L877.50,598.80 L1189.40,600.50" fill="none" stroke="#000000" stroke-width="2.8" stroke-linejoin="round" stroke-dasharray="10.3,4.4" />
<path d="M523.00,499.50 L597.20,537.80 L625.20,616.40 L626.70,638.50 L644.10,641.20 L669.20,683.50 L675.50,685.10 L684.90,701.60 L697.50,705.00 L702.20,704.00 L711.60,697.70 L729.60,688.30 L750.80,689.00 L755.50,686.70 L770.40,686.70 L774.40,684.30 L804.20,684.30 L830.80,642.00 L842.60,641.20 L872.80,607.70 L1240.90,591.30" fill="none" stroke="#0000ff" stroke-width="2.8" stroke-linejoin="round" />
<path d="M530.90,549.20 L604.60,572.80 L625.20,619.40 L626.10,638.50 L644.10,641.20 L667.70,680.40 L684.90,689.00 L702.20,704.00 L714.70,688.30 L750.80,692.20 L768.10,689.00 L794.80,689.80 L804.20,683.50 L829.30,642.80 L846.50,641.20 L863.00,638.90 L922.00,618.20 L972.90,629.00 L1112.30,603.80 L1284.60,592.30" fill="none" stroke="#cc00cc" stroke-width="2.2" stroke-linejoin="round" stroke-dasharray="8,3.6" />
<text x="644.40" y="653.60" font-size="15.2" fill="#d62728" text-anchor="start" textLength="13.80" lengthAdjust="spacingAndGlyphs" >rg</text>
<text x="675.50" y="696.10" font-size="15.2" fill="#9467bd" text-anchor="start" textLength="27.50" lengthAdjust="spacingAndGlyphs" >FG1</text>
<text x="698.30" y="716.00" font-size="15.2" fill="#ff7f0e" text-anchor="start" textLength="27.40" lengthAdjust="spacingAndGlyphs" >AX1</text>
<text x="805.70" y="694.50" font-size="15.2" fill="#1f77b4" text-anchor="start" textLength="27.50" lengthAdjust="spacingAndGlyphs" >FD1</text>
<text x="831.60" y="653.30" font-size="15.2" fill="#2ca02c" text-anchor="start" textLength="13.40" lengthAdjust="spacingAndGlyphs" >rd</text>
<path d="M475.5,478.0 L475.5,716.5 L1324.1,716.5" fill="none" stroke="#000" stroke-width="1.1"/>
<path d="M519.50,716.5 v4.9" stroke="#000" stroke-width="1.1"/>
<text x="519.50" y="737.40" font-size="13.9" fill="#000" text-anchor="middle" textLength="26.24" lengthAdjust="spacingAndGlyphs" >&#8722;50</text>
<path d="M644.50,716.5 v4.9" stroke="#000" stroke-width="1.1"/>
<text x="644.50" y="737.40" font-size="13.9" fill="#000" text-anchor="middle" textLength="8.12" lengthAdjust="spacingAndGlyphs" >0</text>
<path d="M769.50,716.5 v4.9" stroke="#000" stroke-width="1.1"/>
<text x="769.50" y="737.40" font-size="13.9" fill="#000" text-anchor="middle" textLength="16.24" lengthAdjust="spacingAndGlyphs" >50</text>
<path d="M893.50,716.5 v4.9" stroke="#000" stroke-width="1.1"/>
<text x="893.50" y="737.40" font-size="13.9" fill="#000" text-anchor="middle" textLength="24.36" lengthAdjust="spacingAndGlyphs" >100</text>
<path d="M1018.50,716.5 v4.9" stroke="#000" stroke-width="1.1"/>
<text x="1018.50" y="737.40" font-size="13.9" fill="#000" text-anchor="middle" textLength="24.36" lengthAdjust="spacingAndGlyphs" >150</text>
<path d="M1143.50,716.5 v4.9" stroke="#000" stroke-width="1.1"/>
<text x="1143.50" y="737.40" font-size="13.9" fill="#000" text-anchor="middle" textLength="24.36" lengthAdjust="spacingAndGlyphs" >200</text>
<path d="M1268.50,716.5 v4.9" stroke="#000" stroke-width="1.1"/>
<text x="1268.50" y="737.40" font-size="13.9" fill="#000" text-anchor="middle" textLength="24.36" lengthAdjust="spacingAndGlyphs" >250</text>
<path d="M475.5,680.50 h-4.9" stroke="#000" stroke-width="1.1"/>
<text x="464.30" y="685.50" font-size="13.9" fill="#000" text-anchor="end" textLength="25.00" lengthAdjust="spacingAndGlyphs" >135</text>
<path d="M475.5,625.50 h-4.9" stroke="#000" stroke-width="1.1"/>
<text x="464.30" y="630.50" font-size="13.9" fill="#000" text-anchor="end" textLength="25.00" lengthAdjust="spacingAndGlyphs" >140</text>
<path d="M475.5,571.50 h-4.9" stroke="#000" stroke-width="1.1"/>
<text x="464.30" y="576.50" font-size="13.9" fill="#000" text-anchor="end" textLength="25.00" lengthAdjust="spacingAndGlyphs" >145</text>
<path d="M475.5,517.50 h-4.9" stroke="#000" stroke-width="1.1"/>
<text x="464.30" y="522.50" font-size="13.9" fill="#000" text-anchor="end" textLength="25.00" lengthAdjust="spacingAndGlyphs" >150</text>
<text x="898.50" y="758.50" font-size="18" fill="#008000" text-anchor="middle" textLength="200.50" lengthAdjust="spacingAndGlyphs" >Transverse abscissa (m)</text>
<text x="0" y="0" font-size="18" fill="#008000" text-anchor="middle" textLength="88.5" lengthAdjust="spacingAndGlyphs" transform="translate(427.8,598.3) rotate(-90)">Height (m)</text>
<rect x="1157.5" y="486.5" width="163.5" height="50" rx="2" fill="#999999" opacity="0.9"/>
<rect x="1155.5" y="484.5" width="163.3" height="49.8" rx="2" fill="#ffffff" stroke="#cccccc" stroke-width="1"/>
<path d="M1159,492.4 L1182.1,492.4" stroke="#000" stroke-width="3" stroke-dasharray="9.6,3.9"/>
<path d="M1158,508.4 L1184,508.4" stroke="#0000ff" stroke-width="3"/>
<path d="M1159,523 L1179,523" stroke="#cc00cc" stroke-width="2.2" stroke-dasharray="7.7,3.9"/>
<text x="1190.40" y="496.00" font-size="11.2" fill="#111" text-anchor="start" textLength="122.60" lengthAdjust="spacingAndGlyphs" >Previous cross-section</text>
<text x="1191.30" y="511.60" font-size="11.2" fill="#111" text-anchor="start" textLength="72.70" lengthAdjust="spacingAndGlyphs" >Cross-section</text>
<text x="1190.40" y="526.80" font-size="11.2" fill="#111" text-anchor="start" textLength="101.50" lengthAdjust="spacingAndGlyphs" >Next cross-section</text>
<text x="307.5" y="750.5" font-size="34" fill="#cc0000" stroke="#ffff00" stroke-width="3.2" paint-order="stroke" stroke-linejoin="round">4</text>
<path d="M287.5,74.5 L822.5,74.5 L822.5,420.5 L287.5,420.5 Z" fill="none" stroke="#cc0000" stroke-width="3"/>
<path d="M823.5,74.5 L1361.5,74.5 L1361.5,420.5 L823.5,420.5 Z" fill="none" stroke="#cc0000" stroke-width="3"/>
<path d="M287.5,423.5 L1361.5,423.5 L1361.5,766.5 L287.5,766.5 Z" fill="none" stroke="#cc0000" stroke-width="3"/>
<text x="26" y="776" font-size="34" fill="#cc0000" stroke="#ffff00" stroke-width="3.2" paint-order="stroke" stroke-linejoin="round">1</text>
<rect x="1374.5" y="118" width="4" height="582.5" rx="2" fill="#d6d6d6" stroke="#a6a6a6" stroke-width="1"/>
<rect x="1374.5" y="79" width="4" height="40" rx="2" fill="#3d96d8" stroke="#2a70a8" stroke-width="1"/>
<rect x="1370.5" y="111.5" width="12" height="12" rx="2.5" fill="url(#btn)" stroke="#a8a8a8" stroke-width="1"/>
<rect x="1363.5" y="708.5" width="27.5" height="23" rx="2.5" fill="url(#btn)" stroke="#c2c2c2" stroke-width="1"/>
<path d="M1371.5,724 L1383.5,724 L1377.5,717.5 Z" fill="#111"/>
<rect x="1363.5" y="738.5" width="27.5" height="23" rx="2.5" fill="url(#btn)" stroke="#c2c2c2" stroke-width="1"/>
<path d="M1371.5,746 L1383.5,746 L1377.5,752.5 Z" fill="#111"/>
<text x="1355.50" y="781.00" font-size="12.3" fill="#1a1a1a" text-anchor="end" textLength="64.50" lengthAdjust="spacingAndGlyphs" >Kp : 7200.0</text>
<text x="1355.50" y="796.00" font-size="12.3" fill="#1a1a1a" text-anchor="end" textLength="64.50" lengthAdjust="spacingAndGlyphs" >Profil N° : 5</text>
<rect x="1396" y="826" width="1" height="1" fill="#bdbdbd"/>
<rect x="1393" y="826" width="1" height="1" fill="#bdbdbd"/>
<rect x="1396" y="823" width="1" height="1" fill="#bdbdbd"/>
<rect x="1390" y="826" width="1" height="1" fill="#bdbdbd"/>
<rect x="1393" y="823" width="1" height="1" fill="#bdbdbd"/>
<rect x="1396" y="820" width="1" height="1" fill="#bdbdbd"/>
</svg>
</body></html>
